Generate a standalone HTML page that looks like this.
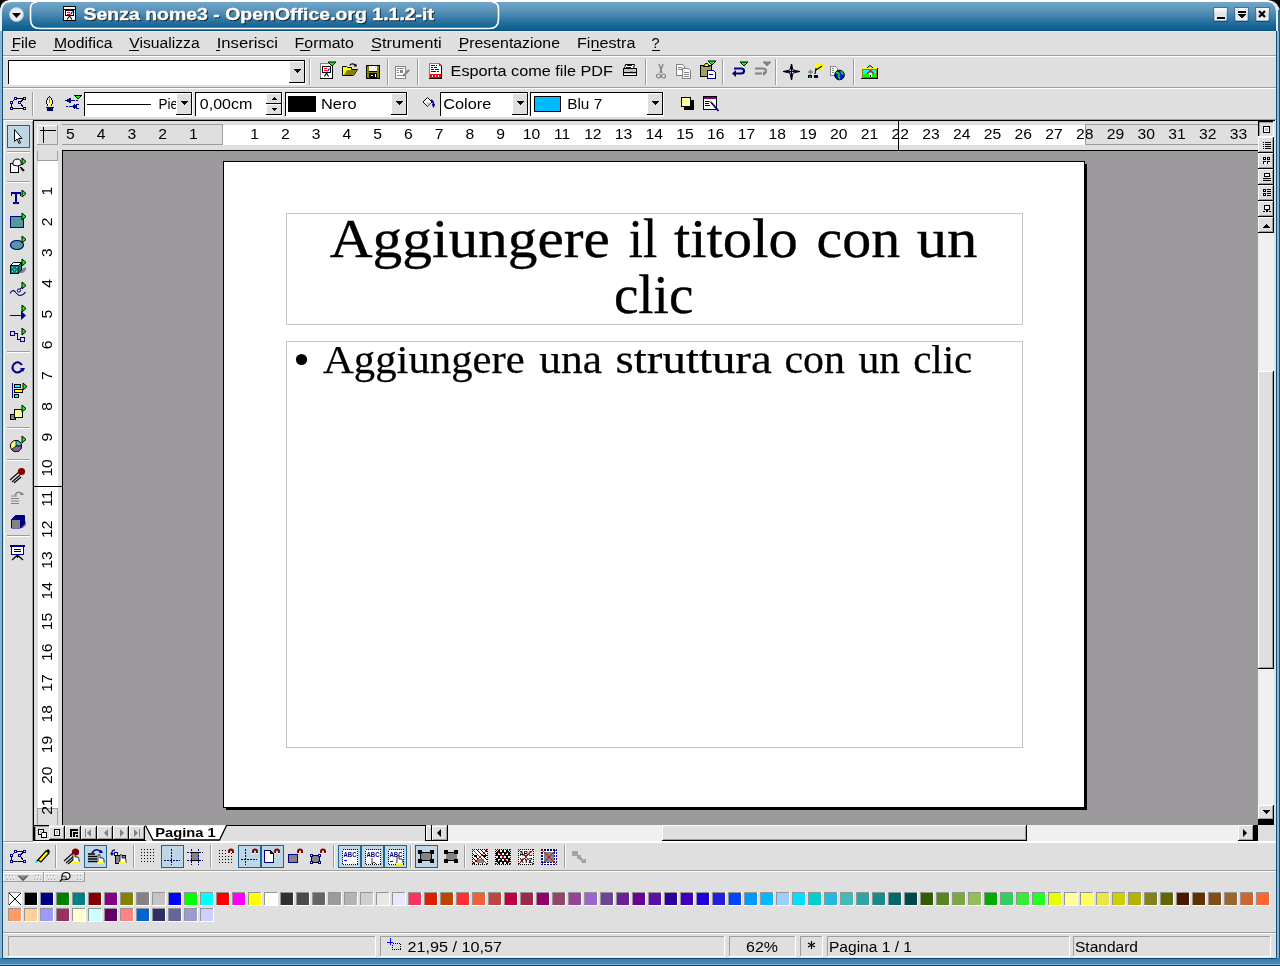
<!DOCTYPE html>
<html><head><meta charset="utf-8"><style>
html,body{margin:0;padding:0;width:1280px;height:966px;overflow:hidden;background:#dedfde;font-family:"Liberation Sans",sans-serif}
svg{display:block;will-change:transform}
text{white-space:pre}
</style></head><body>
<svg width="1280" height="966" viewBox="0 0 1280 966" shape-rendering="crispEdges">
<rect x="0" y="0" width="1280" height="966" fill="#dedfde" /><rect x="0" y="0" width="1280" height="2" fill="#ffffff" /><defs><linearGradient id="tg" x1="0" y1="0" x2="0" y2="1">
<stop offset="0" stop-color="#72a6ca"/><stop offset="0.3" stop-color="#5a93b9"/>
<stop offset="0.55" stop-color="#3a7ea8"/><stop offset="0.8" stop-color="#186798"/>
<stop offset="1" stop-color="#0c5b8c"/></linearGradient>
<linearGradient id="bg2" x1="0" y1="0" x2="0" y2="1">
<stop offset="0" stop-color="#2b78a8"/><stop offset="0.6" stop-color="#4a8cb8"/><stop offset="1" stop-color="#1a6698"/></linearGradient>
</defs><path d="M2,12 Q2,3 11,2 L1268,2 Q1276,3 1276,12 L1276,31 L0,31 Z" fill="url(#tg)" shape-rendering="geometricPrecision"/><rect x="0" y="30" width="1280" height="1" fill="#08507e" /><path d="M0,8 Q0,2 8,2 L10,2 Q2.5,2.5 2,10 L2,31 L0,31 Z" fill="#e8f0f6" shape-rendering="geometricPrecision"/><path d="M0,0 L9,0 Q1,1 0,9 Z" fill="#000" shape-rendering="geometricPrecision"/><path d="M1268,2 Q1278,2.5 1278,12 L1278,31 L1276,31 L1276,12 Q1276,3 1268,2 Z" fill="#e8f0f6" shape-rendering="geometricPrecision"/><rect x="1278" y="10" width="2" height="21" fill="#2a6a98" /><path d="M1280,0 L1268,0 Q1279,1.5 1280,12 Z" fill="#000" shape-rendering="geometricPrecision"/><rect x="0" y="31" width="2" height="935" fill="#8cb4d4" /><rect x="2" y="31" width="1" height="935" fill="#0d4f7a" /><rect x="1276" y="31" width="1" height="935" fill="#0d4f7a" /><rect x="1277" y="31" width="2" height="935" fill="#8cb4d4" /><rect x="1279" y="31" width="1" height="935" fill="#0d4f7a" /><rect x="0" y="958" width="1280" height="8" fill="url(#bg2)" /><rect x="3" y="958" width="1273" height="1" fill="#0d4f7a" /><rect x="0" y="964" width="1280" height="1" fill="#8cb4d4" /><rect x="0" y="965" width="1280" height="1" fill="#0a3e60" /><path d="M37,2 Q30.5,2 30.5,9 L30.5,19 Q30.5,28.5 40,28.5 L489,28.5 Q498.5,28.5 498.5,19 L498.5,9 Q498.5,2 492,2" fill="none" stroke="#ffffff" stroke-width="1.6" shape-rendering="geometricPrecision"/><circle cx="16.5" cy="14.5" r="7" fill="#e8ecf4" stroke="#b8c8d8" stroke-width="0.8" shape-rendering="geometricPrecision"/><path d="M12,13 L21,13 L16.5,18 Z" fill="#000" shape-rendering="geometricPrecision"/><text x="83.50" y="20" font-family="Liberation Sans" font-size="17.15" font-weight="bold" fill="#000000" textLength="350.50" lengthAdjust="spacingAndGlyphs" transform="translate(1,1)" opacity="0.75" stroke="#000" stroke-width="0.3">Senza nome3 - OpenOffice.org 1.1.2-it</text><text x="83.50" y="20" font-family="Liberation Sans" font-size="17.15" font-weight="bold" fill="#ffffff" textLength="350.50" lengthAdjust="spacingAndGlyphs" stroke="#fff" stroke-width="0.35">Senza nome3 - OpenOffice.org 1.1.2-it</text><defs><linearGradient id="wb" x1="0" y1="0" x2="0" y2="1"><stop offset="0" stop-color="#ffffff"/><stop offset="0.5" stop-color="#dfe3ea"/><stop offset="1" stop-color="#f4f6fa"/></linearGradient></defs><path d="M1213.5,7.5 H1227.5 L1227,21 H1214 Z" fill="url(#wb)" stroke="#1a4a78" stroke-width="0.7" shape-rendering="geometricPrecision"/><rect x="1214" y="21" width="14" height="1" fill="#0a3a66" opacity="0.6"/><path d="M1234.5,7.5 H1248.5 L1248,21 H1235 Z" fill="url(#wb)" stroke="#1a4a78" stroke-width="0.7" shape-rendering="geometricPrecision"/><rect x="1235" y="21" width="14" height="1" fill="#0a3a66" opacity="0.6"/><path d="M1255.5,7.5 H1269.5 L1269,21 H1256 Z" fill="url(#wb)" stroke="#1a4a78" stroke-width="0.7" shape-rendering="geometricPrecision"/><rect x="1256" y="21" width="14" height="1" fill="#0a3a66" opacity="0.6"/><rect x="1217" y="17" width="8" height="2" fill="#000" /><rect x="1238" y="11" width="8" height="2" fill="#000" /><path d="M1238,14 L1246,14 L1242,19 Z" fill="#000"/><path d="M1259,11 L1265,17 M1265,11 L1259,17" stroke="#000" stroke-width="2.2" shape-rendering="geometricPrecision"/><rect x="3" y="31" width="1273" height="1" fill="#ece8e4" /><text x="11.70" y="48" font-family="Liberation Sans" font-size="14.53" fill="#000" textLength="24.81" lengthAdjust="spacingAndGlyphs" >File</text><text x="54.00" y="48" font-family="Liberation Sans" font-size="14.53" fill="#000" textLength="58.48" lengthAdjust="spacingAndGlyphs" >Modifica</text><text x="129.30" y="48" font-family="Liberation Sans" font-size="14.53" fill="#000" textLength="70.38" lengthAdjust="spacingAndGlyphs" >Visualizza</text><text x="216.70" y="48" font-family="Liberation Sans" font-size="14.53" fill="#000" textLength="61.29" lengthAdjust="spacingAndGlyphs" >Inserisci</text><text x="294.60" y="48" font-family="Liberation Sans" font-size="14.53" fill="#000" textLength="59.20" lengthAdjust="spacingAndGlyphs" >Formato</text><text x="371.00" y="48" font-family="Liberation Sans" font-size="14.53" fill="#000" textLength="70.71" lengthAdjust="spacingAndGlyphs" >Strumenti</text><text x="458.70" y="48" font-family="Liberation Sans" font-size="14.53" fill="#000" textLength="101.30" lengthAdjust="spacingAndGlyphs" >Presentazione</text><text x="577.00" y="48" font-family="Liberation Sans" font-size="14.53" fill="#000" textLength="58.39" lengthAdjust="spacingAndGlyphs" >Finestra</text><text x="651.50" y="48" font-family="Liberation Sans" font-size="14.53" fill="#000" textLength="8.00" lengthAdjust="spacingAndGlyphs" >?</text><rect x="11" y="50" width="8" height="1" fill="#000" /><rect x="53" y="50" width="13" height="1" fill="#000" /><rect x="129" y="50" width="10" height="1" fill="#000" /><rect x="216" y="50" width="4" height="1" fill="#000" /><rect x="300" y="50" width="10" height="1" fill="#000" /><rect x="371" y="50" width="9" height="1" fill="#000" /><rect x="458" y="50" width="9" height="1" fill="#000" /><rect x="592" y="50" width="9" height="1" fill="#000" /><rect x="652" y="50" width="8" height="1" fill="#000" /><rect x="3" y="55" width="1273" height="1" fill="#9c9e9c" /><rect x="3" y="56" width="1273" height="1" fill="#ffffff" /><rect x="3" y="87" width="1273" height="1" fill="#9c9e9c" /><rect x="3" y="88" width="1273" height="1" fill="#ffffff" /><rect x="8" y="60" width="298" height="25" fill="#ffffff" /><rect x="8" y="60" width="297" height="1" fill="#000" /><rect x="8" y="60" width="1" height="24" fill="#000" /><rect x="304" y="60" width="1" height="23" fill="#000" /><rect x="289" y="61" width="15" height="21" fill="#dedfde" /><rect x="289" y="61" width="1" height="21" fill="#ffffff" /><rect x="289" y="61" width="15" height="1" fill="#ffffff" /><rect x="289" y="82" width="16" height="1" fill="#000" /><path d="M293,69 L301,69 L297,73 Z" fill="#000"/><rect x="309" y="59" width="1" height="26" fill="#9c9e9c" /><rect x="310" y="59" width="1" height="26" fill="#ffffff" /><rect x="387" y="59" width="1" height="26" fill="#9c9e9c" /><rect x="388" y="59" width="1" height="26" fill="#ffffff" /><rect x="417" y="59" width="1" height="26" fill="#9c9e9c" /><rect x="418" y="59" width="1" height="26" fill="#ffffff" /><text x="450.60" y="76" font-family="Liberation Sans" font-size="14.53" fill="#000" textLength="162.41" lengthAdjust="spacingAndGlyphs" >Esporta come file PDF</text><rect x="645" y="59" width="1" height="26" fill="#9c9e9c" /><rect x="646" y="59" width="1" height="26" fill="#ffffff" /><rect x="722" y="59" width="1" height="26" fill="#9c9e9c" /><rect x="723" y="59" width="1" height="26" fill="#ffffff" /><rect x="775" y="59" width="1" height="26" fill="#9c9e9c" /><rect x="776" y="59" width="1" height="26" fill="#ffffff" /><rect x="853" y="59" width="1" height="26" fill="#9c9e9c" /><rect x="854" y="59" width="1" height="26" fill="#ffffff" /><rect x="3" y="119" width="1273" height="1" fill="#9c9e9c" /><rect x="3" y="120" width="1273" height="1" fill="#ffffff" /><rect x="32" y="92" width="1" height="24" fill="#9c9e9c" /><rect x="33" y="92" width="1" height="24" fill="#ffffff" /><rect x="84" y="92" width="109" height="25" fill="#ffffff" /><rect x="84" y="92" width="108" height="1" fill="#000" /><rect x="84" y="92" width="1" height="24" fill="#000" /><rect x="191" y="92" width="1" height="23" fill="#000" /><rect x="176" y="93" width="15" height="21" fill="#dedfde" /><rect x="176" y="93" width="1" height="21" fill="#ffffff" /><rect x="176" y="93" width="15" height="1" fill="#ffffff" /><rect x="176" y="114" width="16" height="1" fill="#000" /><path d="M180,101 L188,101 L184,105 Z" fill="#000"/><rect x="85" y="93" width="91" height="21" fill="#ffffff" /><rect x="87" y="104" width="64" height="1" fill="#000" /><clipPath id="cp1"><rect x="85" y="92" width="91" height="24"/></clipPath><g clip-path="url(#cp1)"><text x="158.50" y="109" font-family="Liberation Sans" font-size="14.53" fill="#000" textLength="19.50" lengthAdjust="spacingAndGlyphs" >Pie</text></g><rect x="195" y="92" width="88" height="25" fill="#ffffff" /><rect x="195" y="92" width="87" height="1" fill="#000" /><rect x="195" y="92" width="1" height="24" fill="#000" /><rect x="281" y="92" width="1" height="23" fill="#000" /><rect x="266" y="93" width="15" height="21" fill="#dedfde" /><rect x="266" y="93" width="1" height="21" fill="#ffffff" /><rect x="266" y="93" width="15" height="1" fill="#ffffff" /><rect x="266" y="114" width="16" height="1" fill="#000" /><rect x="266" y="93" width="15" height="22" fill="#dedfde" /><rect x="266" y="93" width="15" height="1" fill="#ffffff" /><rect x="266" y="93" width="1" height="11" fill="#ffffff" /><rect x="266" y="103" width="16" height="1" fill="#000" /><rect x="266" y="104" width="15" height="1" fill="#ffffff" /><rect x="266" y="104" width="1" height="11" fill="#ffffff" /><rect x="266" y="114" width="16" height="1" fill="#000" /><path d="M271,100 L277,100 L274,97 Z" fill="#000"/><path d="M271,108 L277,108 L274,111 Z" fill="#000"/><text x="199.80" y="109" font-family="Liberation Sans" font-size="14.53" fill="#000" textLength="52.51" lengthAdjust="spacingAndGlyphs" >0,00cm</text><rect x="285" y="92" width="123" height="25" fill="#ffffff" /><rect x="285" y="92" width="122" height="1" fill="#000" /><rect x="285" y="92" width="1" height="24" fill="#000" /><rect x="406" y="92" width="1" height="23" fill="#000" /><rect x="391" y="93" width="15" height="21" fill="#dedfde" /><rect x="391" y="93" width="1" height="21" fill="#ffffff" /><rect x="391" y="93" width="15" height="1" fill="#ffffff" /><rect x="391" y="114" width="16" height="1" fill="#000" /><path d="M395,101 L403,101 L399,105 Z" fill="#000"/><rect x="288" y="96" width="28" height="16" fill="#000" /><text x="321.00" y="109" font-family="Liberation Sans" font-size="14.53" fill="#000" textLength="35.49" lengthAdjust="spacingAndGlyphs" >Nero</text><rect x="440" y="92" width="89" height="25" fill="#ffffff" /><rect x="440" y="92" width="88" height="1" fill="#000" /><rect x="440" y="92" width="1" height="24" fill="#000" /><rect x="527" y="92" width="1" height="23" fill="#000" /><rect x="512" y="93" width="15" height="21" fill="#dedfde" /><rect x="512" y="93" width="1" height="21" fill="#ffffff" /><rect x="512" y="93" width="15" height="1" fill="#ffffff" /><rect x="512" y="114" width="16" height="1" fill="#000" /><path d="M516,101 L524,101 L520,105 Z" fill="#000"/><text x="443.25" y="109" font-family="Liberation Sans" font-size="14.53" fill="#000" textLength="48.00" lengthAdjust="spacingAndGlyphs" >Colore</text><rect x="530" y="92" width="134" height="25" fill="#ffffff" /><rect x="530" y="92" width="133" height="1" fill="#000" /><rect x="530" y="92" width="1" height="24" fill="#000" /><rect x="662" y="92" width="1" height="23" fill="#000" /><rect x="647" y="93" width="15" height="21" fill="#dedfde" /><rect x="647" y="93" width="1" height="21" fill="#ffffff" /><rect x="647" y="93" width="15" height="1" fill="#ffffff" /><rect x="647" y="114" width="16" height="1" fill="#000" /><path d="M651,101 L659,101 L655,105 Z" fill="#000"/><rect x="534" y="96" width="27" height="16" fill="#000" /><rect x="535" y="97" width="25" height="14" fill="#00baff" /><text x="567.20" y="109" font-family="Liberation Sans" font-size="14.53" fill="#000" textLength="35.00" lengthAdjust="spacingAndGlyphs" >Blu 7</text><rect x="4" y="120" width="29" height="1" fill="#ffffff" /><rect x="33" y="120" width="1242" height="1" fill="#000" /><rect x="33" y="120" width="1" height="721" fill="#000" /><rect x="34" y="121" width="1224" height="29" fill="#dedfde" /><rect x="37" y="125" width="21" height="20" fill="#dedfde" /><rect x="37" y="125" width="21" height="1" fill="#ffffff" /><rect x="37" y="125" width="1" height="20" fill="#ffffff" /><rect x="37" y="144" width="21" height="1" fill="#9c9e9c" /><rect x="57" y="125" width="1" height="20" fill="#9c9e9c" /><rect x="62" y="125" width="1196" height="20" fill="#dedfde" /><rect x="222" y="125" width="863" height="20" fill="#ffffff" /><rect x="62" y="150" width="1196" height="1" fill="#000" /><rect x="34" y="151" width="29" height="674" fill="#dedfde" /><rect x="38" y="161" width="20" height="647" fill="#ffffff" /><rect x="62" y="150" width="1" height="675" fill="#000" /><rect x="37" y="151" width="21" height="10" fill="#dedfde" /><rect x="63" y="151" width="1195" height="674" fill="#9c9a9c" /><rect x="223" y="161" width="862" height="647" fill="#000" /><rect x="224" y="162" width="860" height="645" fill="#ffffff" /><rect x="1084" y="164" width="3" height="646" fill="#000" /><rect x="226" y="807" width="861" height="3" fill="#000" /><rect x="286.5" y="213.5" width="736" height="111" fill="none" stroke="#c6c3c6" stroke-width="1"/><rect x="286.5" y="341.5" width="736" height="406" fill="none" stroke="#c6c3c6" stroke-width="1"/><text x="329.70" y="257" font-family="Liberation Serif" font-size="54.96" fill="#000" textLength="280.28" lengthAdjust="spacingAndGlyphs" stroke="#000" stroke-width="0.35">Aggiungere</text><text x="628.75" y="257" font-family="Liberation Serif" font-size="54.96" fill="#000" textLength="28.43" lengthAdjust="spacingAndGlyphs" stroke="#000" stroke-width="0.35">il</text><text x="674.00" y="257" font-family="Liberation Serif" font-size="54.96" fill="#000" textLength="123.72" lengthAdjust="spacingAndGlyphs" stroke="#000" stroke-width="0.35">titolo</text><text x="816.60" y="257" font-family="Liberation Serif" font-size="54.96" fill="#000" textLength="83.59" lengthAdjust="spacingAndGlyphs" stroke="#000" stroke-width="0.35">con</text><text x="916.70" y="257" font-family="Liberation Serif" font-size="54.96" fill="#000" textLength="60.70" lengthAdjust="spacingAndGlyphs" stroke="#000" stroke-width="0.35">un</text><text x="613.90" y="313" font-family="Liberation Serif" font-size="54.96" fill="#000" textLength="79.42" lengthAdjust="spacingAndGlyphs" stroke="#000" stroke-width="0.35">clic</text><circle cx="301.5" cy="359.5" r="5.6" fill="#000" shape-rendering="geometricPrecision"/><text x="323.00" y="373" font-family="Liberation Serif" font-size="39.69" fill="#000" textLength="201.79" lengthAdjust="spacingAndGlyphs" stroke="#000" stroke-width="0.25">Aggiungere</text><text x="539.30" y="373" font-family="Liberation Serif" font-size="39.69" fill="#000" textLength="62.59" lengthAdjust="spacingAndGlyphs" stroke="#000" stroke-width="0.25">una</text><text x="615.60" y="373" font-family="Liberation Serif" font-size="39.69" fill="#000" textLength="156.18" lengthAdjust="spacingAndGlyphs" stroke="#000" stroke-width="0.25">struttura</text><text x="784.50" y="373" font-family="Liberation Serif" font-size="39.69" fill="#000" textLength="60.49" lengthAdjust="spacingAndGlyphs" stroke="#000" stroke-width="0.25">con</text><text x="858.40" y="373" font-family="Liberation Serif" font-size="39.69" fill="#000" textLength="41.50" lengthAdjust="spacingAndGlyphs" stroke="#000" stroke-width="0.25">un</text><text x="913.20" y="373" font-family="Liberation Serif" font-size="39.69" fill="#000" textLength="59.11" lengthAdjust="spacingAndGlyphs" stroke="#000" stroke-width="0.25">clic</text><rect x="1258" y="121" width="17" height="704" fill="#dedfde" /><rect x="1258" y="232" width="16" height="573" fill="#efefef" /><rect x="1259" y="371" width="15" height="434" fill="#dedfde" /><rect x="1259" y="371" width="15" height="1" fill="#ffffff" /><rect x="1259" y="371" width="1" height="434" fill="#ffffff" /><rect x="1259" y="804" width="15" height="1" fill="#9c9e9c" /><rect x="1273" y="371" width="1" height="434" fill="#9c9e9c" /><rect x="1273" y="371" width="1" height="434" fill="#000" /><rect x="34" y="825" width="1224" height="16" fill="#dedfde" /><rect x="1258" y="825" width="17" height="16" fill="#dedfde" /><rect x="3" y="841" width="1273" height="1" fill="#9c9e9c" /><rect x="3" y="842" width="1273" height="1" fill="#ffffff" /><rect x="3" y="870" width="1273" height="1" fill="#9c9e9c" /><rect x="3" y="871" width="1273" height="1" fill="#ffffff" /><rect x="3" y="932" width="1273" height="1" fill="#9c9e9c" /><rect x="3" y="933" width="1273" height="1" fill="#ffffff" /><rect x="8" y="936" width="368" height="1" fill="#9c9e9c" /><rect x="8" y="936" width="1" height="21" fill="#9c9e9c" /><rect x="8" y="956" width="368" height="1" fill="#ffffff" /><rect x="375" y="936" width="1" height="21" fill="#ffffff" /><rect x="380" y="936" width="345" height="1" fill="#9c9e9c" /><rect x="380" y="936" width="1" height="21" fill="#9c9e9c" /><rect x="380" y="956" width="345" height="1" fill="#ffffff" /><rect x="724" y="936" width="1" height="21" fill="#ffffff" /><rect x="729" y="936" width="67" height="1" fill="#9c9e9c" /><rect x="729" y="936" width="1" height="21" fill="#9c9e9c" /><rect x="729" y="956" width="67" height="1" fill="#ffffff" /><rect x="795" y="936" width="1" height="21" fill="#ffffff" /><rect x="800" y="936" width="23" height="1" fill="#9c9e9c" /><rect x="800" y="936" width="1" height="21" fill="#9c9e9c" /><rect x="800" y="956" width="23" height="1" fill="#ffffff" /><rect x="822" y="936" width="1" height="21" fill="#ffffff" /><rect x="827" y="936" width="243" height="1" fill="#9c9e9c" /><rect x="827" y="936" width="1" height="21" fill="#9c9e9c" /><rect x="827" y="956" width="243" height="1" fill="#ffffff" /><rect x="1069" y="936" width="1" height="21" fill="#ffffff" /><rect x="1073" y="936" width="198" height="1" fill="#9c9e9c" /><rect x="1073" y="936" width="1" height="21" fill="#9c9e9c" /><rect x="1073" y="956" width="198" height="1" fill="#ffffff" /><rect x="1270" y="936" width="1" height="21" fill="#ffffff" /><text x="407.50" y="952" font-family="Liberation Sans" font-size="15.26" fill="#000" textLength="94.51" lengthAdjust="spacingAndGlyphs" >21,95 / 10,57</text><text x="746.00" y="952" font-family="Liberation Sans" font-size="15.26" fill="#000" textLength="32.01" lengthAdjust="spacingAndGlyphs" >62%</text><path d="M811.5,941 V949 M808,943 L815,947 M815,943 L808,947" stroke="#000" stroke-width="1.2" shape-rendering="geometricPrecision"/><text x="829.00" y="952" font-family="Liberation Sans" font-size="15.26" fill="#000" textLength="83.01" lengthAdjust="spacingAndGlyphs" >Pagina 1 / 1</text><text x="1075.00" y="952" font-family="Liberation Sans" font-size="15.26" fill="#000" textLength="62.99" lengthAdjust="spacingAndGlyphs" >Standard</text><text x="65.94" y="139" font-family="Liberation Sans" font-size="14.53" fill="#000" textLength="8.73" lengthAdjust="spacingAndGlyphs">5</text><text x="96.68" y="139" font-family="Liberation Sans" font-size="14.53" fill="#000" textLength="8.73" lengthAdjust="spacingAndGlyphs">4</text><text x="127.42" y="139" font-family="Liberation Sans" font-size="14.53" fill="#000" textLength="8.73" lengthAdjust="spacingAndGlyphs">3</text><text x="158.16" y="139" font-family="Liberation Sans" font-size="14.53" fill="#000" textLength="8.73" lengthAdjust="spacingAndGlyphs">2</text><text x="188.90" y="139" font-family="Liberation Sans" font-size="14.53" fill="#000" textLength="8.73" lengthAdjust="spacingAndGlyphs">1</text><text x="250.38" y="139" font-family="Liberation Sans" font-size="14.53" fill="#000" textLength="8.73" lengthAdjust="spacingAndGlyphs">1</text><text x="281.12" y="139" font-family="Liberation Sans" font-size="14.53" fill="#000" textLength="8.73" lengthAdjust="spacingAndGlyphs">2</text><text x="311.86" y="139" font-family="Liberation Sans" font-size="14.53" fill="#000" textLength="8.73" lengthAdjust="spacingAndGlyphs">3</text><text x="342.60" y="139" font-family="Liberation Sans" font-size="14.53" fill="#000" textLength="8.73" lengthAdjust="spacingAndGlyphs">4</text><text x="373.34" y="139" font-family="Liberation Sans" font-size="14.53" fill="#000" textLength="8.73" lengthAdjust="spacingAndGlyphs">5</text><text x="404.08" y="139" font-family="Liberation Sans" font-size="14.53" fill="#000" textLength="8.73" lengthAdjust="spacingAndGlyphs">6</text><text x="434.82" y="139" font-family="Liberation Sans" font-size="14.53" fill="#000" textLength="8.73" lengthAdjust="spacingAndGlyphs">7</text><text x="465.56" y="139" font-family="Liberation Sans" font-size="14.53" fill="#000" textLength="8.73" lengthAdjust="spacingAndGlyphs">8</text><text x="496.30" y="139" font-family="Liberation Sans" font-size="14.53" fill="#000" textLength="8.73" lengthAdjust="spacingAndGlyphs">9</text><text x="522.67" y="139" font-family="Liberation Sans" font-size="14.53" fill="#000" textLength="17.46" lengthAdjust="spacingAndGlyphs">10</text><text x="553.99" y="139" font-family="Liberation Sans" font-size="14.53" fill="#000" textLength="16.30" lengthAdjust="spacingAndGlyphs">11</text><text x="584.15" y="139" font-family="Liberation Sans" font-size="14.53" fill="#000" textLength="17.46" lengthAdjust="spacingAndGlyphs">12</text><text x="614.89" y="139" font-family="Liberation Sans" font-size="14.53" fill="#000" textLength="17.46" lengthAdjust="spacingAndGlyphs">13</text><text x="645.63" y="139" font-family="Liberation Sans" font-size="14.53" fill="#000" textLength="17.46" lengthAdjust="spacingAndGlyphs">14</text><text x="676.37" y="139" font-family="Liberation Sans" font-size="14.53" fill="#000" textLength="17.46" lengthAdjust="spacingAndGlyphs">15</text><text x="707.11" y="139" font-family="Liberation Sans" font-size="14.53" fill="#000" textLength="17.46" lengthAdjust="spacingAndGlyphs">16</text><text x="737.85" y="139" font-family="Liberation Sans" font-size="14.53" fill="#000" textLength="17.46" lengthAdjust="spacingAndGlyphs">17</text><text x="768.59" y="139" font-family="Liberation Sans" font-size="14.53" fill="#000" textLength="17.46" lengthAdjust="spacingAndGlyphs">18</text><text x="799.33" y="139" font-family="Liberation Sans" font-size="14.53" fill="#000" textLength="17.46" lengthAdjust="spacingAndGlyphs">19</text><text x="830.07" y="139" font-family="Liberation Sans" font-size="14.53" fill="#000" textLength="17.46" lengthAdjust="spacingAndGlyphs">20</text><text x="860.81" y="139" font-family="Liberation Sans" font-size="14.53" fill="#000" textLength="17.46" lengthAdjust="spacingAndGlyphs">21</text><text x="891.55" y="139" font-family="Liberation Sans" font-size="14.53" fill="#000" textLength="17.46" lengthAdjust="spacingAndGlyphs">22</text><text x="922.29" y="139" font-family="Liberation Sans" font-size="14.53" fill="#000" textLength="17.46" lengthAdjust="spacingAndGlyphs">23</text><text x="953.03" y="139" font-family="Liberation Sans" font-size="14.53" fill="#000" textLength="17.46" lengthAdjust="spacingAndGlyphs">24</text><text x="983.77" y="139" font-family="Liberation Sans" font-size="14.53" fill="#000" textLength="17.46" lengthAdjust="spacingAndGlyphs">25</text><text x="1014.51" y="139" font-family="Liberation Sans" font-size="14.53" fill="#000" textLength="17.46" lengthAdjust="spacingAndGlyphs">26</text><text x="1045.25" y="139" font-family="Liberation Sans" font-size="14.53" fill="#000" textLength="17.46" lengthAdjust="spacingAndGlyphs">27</text><text x="1075.99" y="139" font-family="Liberation Sans" font-size="14.53" fill="#000" textLength="17.46" lengthAdjust="spacingAndGlyphs">28</text><text x="1106.73" y="139" font-family="Liberation Sans" font-size="14.53" fill="#000" textLength="17.46" lengthAdjust="spacingAndGlyphs">29</text><text x="1137.47" y="139" font-family="Liberation Sans" font-size="14.53" fill="#000" textLength="17.46" lengthAdjust="spacingAndGlyphs">30</text><text x="1168.21" y="139" font-family="Liberation Sans" font-size="14.53" fill="#000" textLength="17.46" lengthAdjust="spacingAndGlyphs">31</text><text x="1198.95" y="139" font-family="Liberation Sans" font-size="14.53" fill="#000" textLength="17.46" lengthAdjust="spacingAndGlyphs">32</text><text x="1229.69" y="139" font-family="Liberation Sans" font-size="14.53" fill="#000" textLength="17.46" lengthAdjust="spacingAndGlyphs">33</text><rect x="62" y="124" width="161" height="1" fill="#9c9e9c" /><rect x="62" y="144" width="161" height="1" fill="#9c9e9c" /><rect x="222" y="124" width="1" height="21" fill="#9c9e9c" /><rect x="1085" y="124" width="173" height="1" fill="#9c9e9c" /><rect x="1085" y="144" width="173" height="1" fill="#9c9e9c" /><rect x="1085" y="124" width="1" height="21" fill="#9c9e9c" /><rect x="898" y="121" width="1" height="29" fill="#000" /><text transform="translate(51.5,191.24) rotate(-90)" x="-4.36" y="0" font-family="Liberation Sans" font-size="14.53" fill="#000" textLength="8.73" lengthAdjust="spacingAndGlyphs">1</text><text transform="translate(51.5,221.98) rotate(-90)" x="-4.36" y="0" font-family="Liberation Sans" font-size="14.53" fill="#000" textLength="8.73" lengthAdjust="spacingAndGlyphs">2</text><text transform="translate(51.5,252.72) rotate(-90)" x="-4.36" y="0" font-family="Liberation Sans" font-size="14.53" fill="#000" textLength="8.73" lengthAdjust="spacingAndGlyphs">3</text><text transform="translate(51.5,283.46) rotate(-90)" x="-4.36" y="0" font-family="Liberation Sans" font-size="14.53" fill="#000" textLength="8.73" lengthAdjust="spacingAndGlyphs">4</text><text transform="translate(51.5,314.2) rotate(-90)" x="-4.36" y="0" font-family="Liberation Sans" font-size="14.53" fill="#000" textLength="8.73" lengthAdjust="spacingAndGlyphs">5</text><text transform="translate(51.5,344.94) rotate(-90)" x="-4.36" y="0" font-family="Liberation Sans" font-size="14.53" fill="#000" textLength="8.73" lengthAdjust="spacingAndGlyphs">6</text><text transform="translate(51.5,375.67999999999995) rotate(-90)" x="-4.36" y="0" font-family="Liberation Sans" font-size="14.53" fill="#000" textLength="8.73" lengthAdjust="spacingAndGlyphs">7</text><text transform="translate(51.5,406.41999999999996) rotate(-90)" x="-4.36" y="0" font-family="Liberation Sans" font-size="14.53" fill="#000" textLength="8.73" lengthAdjust="spacingAndGlyphs">8</text><text transform="translate(51.5,437.15999999999997) rotate(-90)" x="-4.36" y="0" font-family="Liberation Sans" font-size="14.53" fill="#000" textLength="8.73" lengthAdjust="spacingAndGlyphs">9</text><text transform="translate(51.5,467.9) rotate(-90)" x="-8.73" y="0" font-family="Liberation Sans" font-size="14.53" fill="#000" textLength="17.46" lengthAdjust="spacingAndGlyphs">10</text><text transform="translate(51.5,498.64) rotate(-90)" x="-8.15" y="0" font-family="Liberation Sans" font-size="14.53" fill="#000" textLength="16.30" lengthAdjust="spacingAndGlyphs">11</text><text transform="translate(51.5,529.38) rotate(-90)" x="-8.73" y="0" font-family="Liberation Sans" font-size="14.53" fill="#000" textLength="17.46" lengthAdjust="spacingAndGlyphs">12</text><text transform="translate(51.5,560.12) rotate(-90)" x="-8.73" y="0" font-family="Liberation Sans" font-size="14.53" fill="#000" textLength="17.46" lengthAdjust="spacingAndGlyphs">13</text><text transform="translate(51.5,590.8599999999999) rotate(-90)" x="-8.73" y="0" font-family="Liberation Sans" font-size="14.53" fill="#000" textLength="17.46" lengthAdjust="spacingAndGlyphs">14</text><text transform="translate(51.5,621.5999999999999) rotate(-90)" x="-8.73" y="0" font-family="Liberation Sans" font-size="14.53" fill="#000" textLength="17.46" lengthAdjust="spacingAndGlyphs">15</text><text transform="translate(51.5,652.3399999999999) rotate(-90)" x="-8.73" y="0" font-family="Liberation Sans" font-size="14.53" fill="#000" textLength="17.46" lengthAdjust="spacingAndGlyphs">16</text><text transform="translate(51.5,683.0799999999999) rotate(-90)" x="-8.73" y="0" font-family="Liberation Sans" font-size="14.53" fill="#000" textLength="17.46" lengthAdjust="spacingAndGlyphs">17</text><text transform="translate(51.5,713.8199999999999) rotate(-90)" x="-8.73" y="0" font-family="Liberation Sans" font-size="14.53" fill="#000" textLength="17.46" lengthAdjust="spacingAndGlyphs">18</text><text transform="translate(51.5,744.56) rotate(-90)" x="-8.73" y="0" font-family="Liberation Sans" font-size="14.53" fill="#000" textLength="17.46" lengthAdjust="spacingAndGlyphs">19</text><text transform="translate(51.5,775.3) rotate(-90)" x="-8.73" y="0" font-family="Liberation Sans" font-size="14.53" fill="#000" textLength="17.46" lengthAdjust="spacingAndGlyphs">20</text><text transform="translate(51.5,806.04) rotate(-90)" x="-8.73" y="0" font-family="Liberation Sans" font-size="14.53" fill="#000" textLength="17.46" lengthAdjust="spacingAndGlyphs">21</text><rect x="34" y="486" width="28" height="1" fill="#000" /><rect x="37" y="160" width="21" height="1" fill="#9c9e9c" /><rect x="57" y="151" width="1" height="10" fill="#9c9e9c" /><g transform="translate(320,63)"><rect x="0" y="0" width="13" height="16" fill="#ffffff"/><rect x="0" y="0" width="9" height="1" fill="#848284"/><rect x="0" y="0" width="1" height="16" fill="#848284"/><rect x="0" y="15" width="13" height="1" fill="#000"/><rect x="12" y="3" width="1" height="13" fill="#000"/><rect x="2" y="3" width="9" height="1" fill="#000"/><rect x="2" y="3" width="1" height="7" fill="#000"/><rect x="10" y="3" width="1" height="7" fill="#000"/><rect x="2" y="9" width="9" height="1" fill="#000"/><rect x="4" y="5" width="3" height="1" fill="#ff0000"/><rect x="4" y="7" width="3" height="1" fill="#ff0000"/><path d="M7.5,8.5 L9.5,5.5" fill="none" stroke="#0000ff" stroke-width="1.2" shape-rendering="geometricPrecision" /><path d="M6.5,10 L4.5,13.5 M6.5,10 L8.5,13.5" fill="none" stroke="#000" stroke-width="1.1" shape-rendering="geometricPrecision" /><path d="M8,-1 L16,-1 L12,3 Z" fill="#00ff00" stroke="#000" stroke-width="1" shape-rendering="geometricPrecision" /></g><g transform="translate(342,63)"><path d="M0.5,3.5 L4.5,3.5 L5.5,4.5 L9.5,4.5 L9.5,6.5 L15.5,6.5 L11.5,12.5 L0.5,12.5 Z" fill="#ffff00" stroke="#000" stroke-width="1" shape-rendering="geometricPrecision" /><path d="M2,12 L5,7 L15,7 L11,12 Z" fill="#848200" stroke="none" stroke-width="1" shape-rendering="geometricPrecision" /><path d="M7.5,2.5 Q10,-0.5 13,2" fill="none" stroke="#000" stroke-width="1.1" shape-rendering="geometricPrecision" /><path d="M11.5,3.5 L15,3.5 L14,0.5 Z" fill="#000" stroke="none" stroke-width="1" shape-rendering="geometricPrecision" /></g><g transform="translate(366,65)"><rect x="0" y="0" width="14" height="14" fill="#000"/><rect x="1" y="1" width="12" height="12" fill="#848200"/><rect x="3" y="1" width="8" height="6" fill="#ffffff"/><rect x="3" y="6" width="8" height="1" fill="#000"/><rect x="3" y="8" width="8" height="5" fill="#000"/><rect x="9" y="9" width="1" height="3" fill="#ffffff"/><rect x="5" y="10" width="2" height="1" fill="#ffffff"/><path d="M4.5,1.5 h1 v1 h-1z M6.5,3.5 h1 v1 h-1z M8.5,1.5 h1 v1 h-1z" fill="#c6c3c6" stroke="none" stroke-width="1" /></g><g transform="translate(395,66)"><path d="M0.5,0.5 H10.5 V12.5 H0.5 Z" fill="#ffffff" stroke="#848284" stroke-width="1" /><rect x="2" y="2" width="7" height="1" fill="#848284"/><rect x="2" y="4" width="2" height="1" fill="#848284"/><rect x="5" y="4" width="3" height="3" fill="#848284"/><rect x="2" y="6" width="2" height="1" fill="#848284"/><rect x="2" y="9" width="7" height="1" fill="#848284"/><path d="M8,10 L14,4" fill="none" stroke="#848284" stroke-width="2.2" shape-rendering="geometricPrecision" /></g><g transform="translate(429,63)"><path d="M0.5,0.5 H10 L12.5,3 V15.5 H0.5 Z" fill="#ffffff" stroke="#848284" stroke-width="1" /><rect x="12" y="3" width="1" height="13" fill="#000"/><rect x="0" y="15" width="13" height="1" fill="#000"/><path d="M10,0 L13,3 L10,3 Z" fill="#ff0000" stroke="none" stroke-width="1" shape-rendering="geometricPrecision" /><rect x="2" y="2" width="4" height="1" fill="#0000ff"/><rect x="7" y="2" width="1" height="1" fill="#0000ff"/><rect x="2" y="4" width="2" height="1" fill="#0000ff"/><rect x="5" y="4" width="3" height="1" fill="#0000ff"/><rect x="2" y="6" width="3" height="1" fill="#0000ff"/><rect x="6" y="6" width="4" height="1" fill="#0000ff"/><rect x="2" y="8" width="5" height="1" fill="#0000ff"/><rect x="8" y="8" width="2" height="1" fill="#0000ff"/><rect x="1" y="11" width="11" height="4" fill="#ff0000"/><rect x="3" y="12" width="1" height="2" fill="#ffffff"/><rect x="6" y="12" width="1" height="2" fill="#ffffff"/><rect x="9" y="12" width="1" height="2" fill="#ffffff"/></g><g transform="translate(622,63)"><path d="M3.5,1.5 H12.5 L11.5,5.5 H2.5 Z" fill="#ffffff" stroke="#000" stroke-width="1" shape-rendering="geometricPrecision" /><rect x="5" y="2" width="5" height="1" fill="#0000ff"/><rect x="4" y="4" width="5" height="1" fill="#0000ff"/><path d="M1.5,5.5 H14.5 V12.5 H1.5 Z" fill="#c6c3c6" stroke="#000" stroke-width="1" /><rect x="2" y="9" width="12" height="1" fill="#000"/><rect x="8" y="8" width="3" height="1" fill="#00ff00"/><rect x="2" y="11" width="12" height="1" fill="#ffffff"/></g><g transform="translate(656,64)"><path d="M3,0 L6,9 M7,0 L4,9" fill="none" stroke="#848284" stroke-width="1.3" shape-rendering="geometricPrecision" /><circle cx="2.5" cy="12" r="2" fill="none" stroke="#848284" stroke-width="1.2" shape-rendering="geometricPrecision"/><circle cx="7.5" cy="12" r="2" fill="none" stroke="#848284" stroke-width="1.2" shape-rendering="geometricPrecision"/></g><g transform="translate(676,64)"><path d="M0.5,0.5 H6.5 L8.5,2.5 V11.5 H0.5 Z" fill="#ffffff" stroke="#848284" stroke-width="1.3" /><rect x="2" y="3" width="4" height="1" fill="#848284"/><rect x="2" y="5" width="4" height="1" fill="#848284"/><path d="M6.5,4.5 H12.5 L14.5,6.5 V14.5 H6.5 Z" fill="#ffffff" stroke="#848284" stroke-width="1.3" /><rect x="8" y="8" width="5" height="1" fill="#848284"/><rect x="8" y="10" width="5" height="1" fill="#848284"/><rect x="8" y="12" width="5" height="1" fill="#848284"/></g><g transform="translate(700,62)"><path d="M0.5,3.5 H11.5 V14.5 H0.5 Z" fill="#a59e63" stroke="#000" stroke-width="1" /><path d="M3.5,4.5 L5.5,1.5 H7.5 L9.5,4.5 Z" fill="#ffff00" stroke="#000" stroke-width="1" shape-rendering="geometricPrecision" /><path d="M7.5,8.5 H13.5 L15.5,10.5 V16.5 H7.5 Z" fill="#ffffff" stroke="#000084" stroke-width="1.4" /><rect x="9" y="12" width="4" height="1" fill="#000084"/><path d="M8,-1 L16,-1 L12,3 Z" fill="#00ff00" stroke="#000" stroke-width="1" shape-rendering="geometricPrecision" /></g><g transform="translate(731,63)"><path d="M3,5.5 H10 Q13,5.5 13,8 Q13,10.5 10,10.5 H3" fill="none" stroke="#000084" stroke-width="2.2" shape-rendering="geometricPrecision" /><path d="M1,10.5 L5,7 L5,14 Z" fill="#000084" stroke="none" stroke-width="1" shape-rendering="geometricPrecision" /><path d="M9,-1 L17,-1 L13,3 Z" fill="#00ff00" stroke="#000" stroke-width="1" shape-rendering="geometricPrecision" /></g><g transform="translate(754,63)"><path d="M1,10.5 H8 M1,5.5 H9 Q12,5.5 12,8 Q12,10.5 9,10.5" fill="none" stroke="#848284" stroke-width="2" shape-rendering="geometricPrecision" /><path d="M9,8 L12,10.5 L9,13 Z" fill="#848284" stroke="none" stroke-width="1" shape-rendering="geometricPrecision" /><path d="M9,-1 L17,-1 L13,3 Z" fill="#848284" stroke="#848284" stroke-width="1" shape-rendering="geometricPrecision" /></g><g transform="translate(783,64)"><path d="M8.5,0 L10,6 L17,7.5 L10,9 L8.5,16 L7,9 L0,7.5 L7,6 Z" fill="#ffffff" stroke="#000" stroke-width="1" shape-rendering="geometricPrecision" /><path d="M8.5,1 L10,6 L15,7.5 L10,7.5 Z M8.5,14 L7,9 L2,7.5 L7,7.5 Z" fill="#000084" stroke="none" stroke-width="1" shape-rendering="geometricPrecision" /><path d="M8.5,0 V16 M0,7.5 H17" fill="none" stroke="#000" stroke-width="1.2" shape-rendering="geometricPrecision" /></g><g transform="translate(807,64)"><rect x="8" y="0" width="9" height="6" fill="#ffff00"/><path d="M1,8 H6 M3.5,5.5 V10.5" fill="none" stroke="#848284" stroke-width="1.5" shape-rendering="geometricPrecision" /><rect x="1" y="11" width="4" height="3" fill="#000"/><rect x="2" y="12" width="2" height="2" fill="#008284"/><rect x="7" y="11" width="4" height="3" fill="#000"/><rect x="8" y="12" width="2" height="2" fill="#000084"/><path d="M8,10 L9,4 M9,6 L15,2" fill="none" stroke="#000" stroke-width="1.1" shape-rendering="geometricPrecision" /></g><g transform="translate(830,66)"><path d="M0.5,0.5 H5.5 L7.5,2.5 V9.5 H0.5 Z" fill="#ffffff" stroke="#848284" stroke-width="1" /><rect x="2" y="2" width="2" height="1" fill="#848284"/><rect x="2" y="4" width="2" height="1" fill="#848284"/><rect x="2" y="6" width="2" height="1" fill="#848284"/><circle cx="9.5" cy="9" r="4.8" fill="#0000ff" stroke="#000" stroke-width="1" shape-rendering="geometricPrecision"/><path d="M6,7 Q8,6 9,8 Q8,11 10,13 M11,5 Q12,8 13.5,8" fill="none" stroke="#00ff00" stroke-width="1.6" shape-rendering="geometricPrecision" /></g><g transform="translate(861,66)"><path d="M6,2 L9,-0.5 L12,2" fill="none" stroke="#000" stroke-width="1" shape-rendering="geometricPrecision" /><rect x="0" y="2" width="17" height="11" fill="#ffff00"/><rect x="1" y="3" width="15" height="9" fill="#848200"/><rect x="2" y="4" width="13" height="7" fill="#00ffff"/><rect x="2" y="8" width="13" height="3" fill="#00ff00"/><path d="M6,8 L9.5,4.5 L13,8" fill="none" stroke="#ff0000" stroke-width="1.5" shape-rendering="geometricPrecision" /><rect x="8" y="7" width="3" height="4" fill="#ffffff"/><rect x="9" y="9" width="1" height="2" fill="#000"/><rect x="16" y="2" width="1" height="11" fill="#000"/><rect x="0" y="12" width="17" height="1" fill="#000"/></g><g transform="translate(10,97)"><path d="M5.5,1.5 H14.5 L9.5,5.5 L14.5,11.5 H1.5 V5.5 Z" fill="none" stroke="#000" stroke-width="1" /><rect x="4.0" y="0.0" width="3" height="3" fill="#000084"/><rect x="5.0" y="1.0" width="1" height="1" fill="#ffffff"/><rect x="13.0" y="0.0" width="3" height="3" fill="#000084"/><rect x="14.0" y="1.0" width="1" height="1" fill="#ffffff"/><rect x="0.0" y="4.0" width="3" height="3" fill="#000084"/><rect x="1.0" y="5.0" width="1" height="1" fill="#ffffff"/><rect x="8.0" y="4.0" width="3" height="3" fill="#000084"/><rect x="9.0" y="5.0" width="1" height="1" fill="#ffffff"/><rect x="0.0" y="10.0" width="3" height="3" fill="#000084"/><rect x="1.0" y="11.0" width="1" height="1" fill="#ffffff"/><rect x="13.0" y="10.0" width="3" height="3" fill="#000084"/><rect x="14.0" y="11.0" width="1" height="1" fill="#ffffff"/></g><g transform="translate(45,96)"><rect x="4" y="0" width="1" height="1" fill="#000"/><rect x="3" y="1" width="1" height="1" fill="#000"/><rect x="5" y="1" width="1" height="1" fill="#000"/><rect x="2" y="2" width="1" height="1" fill="#000"/><rect x="6" y="2" width="1" height="1" fill="#000"/><rect x="2" y="3" width="1" height="1" fill="#000"/><rect x="6" y="3" width="1" height="1" fill="#000"/><rect x="1" y="4" width="1" height="1" fill="#000"/><rect x="7" y="4" width="1" height="1" fill="#000"/><rect x="1" y="5" width="1" height="1" fill="#000"/><rect x="7" y="5" width="1" height="1" fill="#000"/><rect x="1" y="6" width="1" height="1" fill="#000"/><rect x="7" y="6" width="1" height="1" fill="#000"/><rect x="1" y="7" width="1" height="1" fill="#000"/><rect x="7" y="7" width="1" height="1" fill="#000"/><rect x="2" y="8" width="1" height="1" fill="#000"/><rect x="6" y="8" width="1" height="1" fill="#000"/><rect x="2" y="9" width="1" height="1" fill="#000"/><rect x="6" y="9" width="1" height="1" fill="#000"/><rect x="4" y="1" width="1" height="1" fill="#ffff00"/><rect x="3" y="2" width="3" height="2" fill="#ffffff"/><rect x="2" y="4" width="5" height="4" fill="#ffffff"/><rect x="3" y="8" width="3" height="2" fill="#ffffff"/><rect x="3" y="3" width="1" height="1" fill="#ffff00"/><rect x="5" y="4" width="1" height="1" fill="#ffff00"/><rect x="3" y="5" width="1" height="1" fill="#ffff00"/><rect x="5" y="6" width="1" height="1" fill="#ffff00"/><rect x="3" y="7" width="1" height="1" fill="#ffff00"/><rect x="5" y="8" width="1" height="1" fill="#ffff00"/><rect x="4" y="9" width="1" height="1" fill="#ffff00"/><rect x="4" y="2" width="1" height="5" fill="#848284"/><rect x="1" y="11" width="8" height="1" fill="#000084"/><rect x="2" y="12" width="6" height="3" fill="#000084"/><rect x="4" y="12" width="2" height="3" fill="#000"/></g><g transform="translate(65,96)"><path d="M9.5,-0.5 L16.5,-0.5 L13,3 Z" fill="#00ff00" stroke="#000" stroke-width="1" /><rect x="0" y="4" width="2" height="1" fill="#000084"/><rect x="2" y="3" width="2" height="3" fill="#000084"/><rect x="4" y="2" width="2" height="5" fill="#000084"/><rect x="6" y="4" width="4" height="1" fill="#000084"/><rect x="11" y="4" width="2" height="1" fill="#000084"/><rect x="1" y="10" width="2" height="1" fill="#000084"/><rect x="4" y="10" width="4" height="1" fill="#000084"/><rect x="8" y="9" width="1" height="3" fill="#000084"/><rect x="9" y="8" width="1" height="5" fill="#000084"/><rect x="10" y="9" width="1" height="3" fill="#000084"/><rect x="11" y="8" width="3" height="1" fill="#000084"/><rect x="11" y="12" width="3" height="1" fill="#000084"/><rect x="11" y="9" width="1" height="3" fill="#000084"/></g><g transform="translate(420,96)"><path d="M3,6 L7.5,1.5 L12,6 L7.5,10.5 Z" fill="#ffffff" stroke="#000" stroke-width="1" shape-rendering="geometricPrecision" /><path d="M6,5 L8,7 L11,7 L8,10 Z" fill="#84c3e7" stroke="none" stroke-width="1" shape-rendering="geometricPrecision" /><path d="M11,4 Q14,5 13.5,11" fill="none" stroke="#000084" stroke-width="1.6" shape-rendering="geometricPrecision" /><path d="M12,8 L15,8 L13.5,12 Z" fill="#000084" stroke="none" stroke-width="1" shape-rendering="geometricPrecision" /></g><g transform="translate(681,97)"><rect x="3" y="3" width="10" height="10" fill="#000"/><rect x="0" y="0" width="10" height="10" fill="#000"/><rect x="1" y="1" width="8" height="8" fill="#ffff9c"/></g><g transform="translate(703,96)"><rect x="0" y="0" width="14" height="14" fill="#ffffff"/><path d="M0.5,0.5 H13.5 V13.5 H0.5 Z" fill="none" stroke="#000" stroke-width="1" /><rect x="1" y="1" width="12" height="2" fill="#840084"/><rect x="2" y="5" width="5" height="1" fill="#000"/><rect x="2" y="7" width="4" height="1" fill="#000"/><rect x="2" y="9" width="5" height="1" fill="#000"/><path d="M7,5 L15.5,15" fill="none" stroke="#000084" stroke-width="1.8" shape-rendering="geometricPrecision" /><path d="M6,3.5 L9,6.5 M9,3.5 L6,6.5" fill="none" stroke="#ffff00" stroke-width="1" shape-rendering="geometricPrecision" /></g><rect x="4" y="120" width="28" height="1" fill="#ffffff" /><rect x="3" y="120" width="1" height="721" fill="#dedfde" /><rect x="32" y="121" width="1" height="720" fill="#9c9e9c" /><rect x="7.5" y="125.5" width="22" height="22" fill="#bdd7e7" stroke="#186594" stroke-width="1"/><path d="M14.5,129.5 L14.5,141.5 L17,139 L19,143.5 L20.5,142.8 L18.5,138.5 L22,138.5 Z" fill="#ffffff" stroke="#000" stroke-width="1" shape-rendering="geometricPrecision" /><rect x="7" y="151" width="23" height="1" fill="#9c9e9c" /><rect x="7" y="152" width="23" height="1" fill="#ffffff" /><rect x="7" y="181" width="23" height="1" fill="#9c9e9c" /><rect x="7" y="182" width="23" height="1" fill="#ffffff" /><rect x="7" y="351" width="23" height="1" fill="#9c9e9c" /><rect x="7" y="352" width="23" height="1" fill="#ffffff" /><rect x="7" y="427" width="23" height="1" fill="#9c9e9c" /><rect x="7" y="428" width="23" height="1" fill="#ffffff" /><rect x="7" y="459" width="23" height="1" fill="#9c9e9c" /><rect x="7" y="460" width="23" height="1" fill="#ffffff" /><rect x="7" y="535" width="23" height="1" fill="#9c9e9c" /><rect x="7" y="536" width="23" height="1" fill="#ffffff" /><g transform="translate(10,158)"><rect x="0" y="5" width="9" height="10" fill="#000"/><rect x="1" y="6" width="7" height="8" fill="#ffffff"/><path d="M3,7 Q2,1 8,1 Q12,2 11,7 Q8,9 3,7 Z" fill="#f7f3f7" stroke="#000" stroke-width="1" shape-rendering="geometricPrecision" /><path d="M12,0 L16,3.5 L12,7 Z" fill="#00ff00" stroke="#000" stroke-width="1" shape-rendering="geometricPrecision" /><path d="M11,10 L14,13" fill="none" stroke="#000" stroke-width="2" shape-rendering="geometricPrecision" /><rect x="10" y="9" width="2" height="1" fill="#0000ff"/></g><g transform="translate(10,190)"><rect x="1" y="2" width="10" height="2" fill="#000084"/><rect x="5" y="2" width="2" height="11" fill="#000084"/><rect x="3" y="12" width="6" height="2" fill="#000084"/><rect x="1" y="2" width="1" height="4" fill="#000084"/><rect x="10" y="2" width="1" height="4" fill="#000084"/><path d="M12,0 L16,3.5 L12,7 Z" fill="#00ff00" stroke="#000" stroke-width="1" shape-rendering="geometricPrecision" /></g><g transform="translate(10,213)"><path d="M0.5,3.5 H13.5 V14.5 H0.5 Z" fill="#529a9c" stroke="#000084" stroke-width="1.2" /><path d="M12,0 L16,3.5 L12,7 Z" fill="#00ff00" stroke="#000" stroke-width="1" shape-rendering="geometricPrecision" /></g><g transform="translate(10,236)"><ellipse cx="7" cy="9" rx="6.5" ry="4.5" fill="#529a9c" stroke="#000084" stroke-width="1.2" shape-rendering="geometricPrecision"/><path d="M12,0 L16,3.5 L12,7 Z" fill="#00ff00" stroke="#000" stroke-width="1" shape-rendering="geometricPrecision" /></g><g transform="translate(10,259)"><path d="M2,14 H13 L16,11 V8" fill="#848284" stroke="none" stroke-width="1" shape-rendering="geometricPrecision" /><path d="M0.5,6.5 L3.5,3.5 H11.5 L8.5,6.5 Z" fill="#ffffff" stroke="#000" stroke-width="1" shape-rendering="geometricPrecision" /><rect x="0" y="6" width="9" height="9" fill="#000"/><rect x="1" y="7" width="7" height="7" fill="#008284"/><rect x="2" y="8" width="1" height="1" fill="#c6c3c6"/><rect x="4" y="10" width="1" height="1" fill="#c6c3c6"/><rect x="6" y="8" width="1" height="1" fill="#c6c3c6"/><rect x="2" y="12" width="1" height="1" fill="#c6c3c6"/><rect x="6" y="12" width="1" height="1" fill="#c6c3c6"/><path d="M8.5,6.5 L11.5,3.5 V11 L8.5,14" fill="#008284" stroke="#000" stroke-width="1" shape-rendering="geometricPrecision" /><path d="M12,0 L16,3.5 L12,7 Z" fill="#00ff00" stroke="#000" stroke-width="1" shape-rendering="geometricPrecision" /></g><g transform="translate(10,282)"><path d="M0,11.5 Q2.5,7 5,9.5 Q8,13.5 10,13.5 Q13,13.5 15.5,10" fill="none" stroke="#000084" stroke-width="1.1" shape-rendering="geometricPrecision" /><circle cx="9" cy="8.5" r="1.6" fill="none" stroke="#000084" stroke-width="1" shape-rendering="geometricPrecision"/><rect x="10" y="6" width="1" height="1" fill="#000084"/><rect x="11" y="5" width="1" height="1" fill="#000084"/><path d="M12,0 L16,3.5 L12,7 Z" fill="#00ff00" stroke="#000" stroke-width="1" shape-rendering="geometricPrecision" /></g><g transform="translate(10,305)"><rect x="0" y="10" width="12" height="1" fill="#000084"/><path d="M11,6 L16,10.5 L11,15 Z" fill="#000084" stroke="none" stroke-width="1" shape-rendering="geometricPrecision" /><path d="M12,0 L16,3.5 L12,7 Z" fill="#00ff00" stroke="#000" stroke-width="1" shape-rendering="geometricPrecision" /></g><g transform="translate(10,328)"><path d="M0.5,3.5 H4.5 V7.5 H0.5 Z" fill="none" stroke="#000084" stroke-width="1.2" /><path d="M4.5,5.5 H7.5 V11.5 H10.5" fill="none" stroke="#000084" stroke-width="1.2" /><path d="M10.5,9.5 H14.5 V13.5 H10.5 Z" fill="none" stroke="#000084" stroke-width="1.2" /><path d="M12,0 L16,3.5 L12,7 Z" fill="#00ff00" stroke="#000" stroke-width="1" shape-rendering="geometricPrecision" /></g><g transform="translate(11,361)"><path d="M11,4 Q7,-1 3,3 Q0,7 3,10 Q7,13.5 11,9" fill="none" stroke="#000084" stroke-width="2" shape-rendering="geometricPrecision" /><path d="M9,7 L14,7 L12,11 Z" fill="#000084" stroke="none" stroke-width="1" shape-rendering="geometricPrecision" /></g><g transform="translate(12,382)"><rect x="0" y="1" width="1" height="15" fill="#000084"/><rect x="2" y="2" width="7" height="4" fill="#000"/><rect x="3" y="3" width="5" height="2" fill="#00ffff"/><rect x="2" y="7" width="9" height="4" fill="#000"/><rect x="3" y="8" width="7" height="2" fill="#ffff00"/><rect x="2" y="12" width="5" height="4" fill="#000"/><rect x="3" y="13" width="3" height="2" fill="#00ffff"/><path d="M11,1 L15,4.5 L11,8 Z" fill="#00ff00" stroke="#000" stroke-width="1" shape-rendering="geometricPrecision" /></g><g transform="translate(10,405)"><rect x="0" y="9" width="6" height="6" fill="#000"/><rect x="1" y="10" width="4" height="4" fill="#848284"/><rect x="4" y="4" width="9" height="9" fill="#000"/><rect x="5" y="5" width="7" height="7" fill="#ffff9c"/><path d="M12,0 L16,3.5 L12,7 Z" fill="#00ff00" stroke="#000" stroke-width="1" shape-rendering="geometricPrecision" /></g><g transform="translate(10,436)"><circle cx="6" cy="10" r="5.6" fill="#ffff84" stroke="#000" stroke-width="1" shape-rendering="geometricPrecision"/><path d="M6,10 L6,4.4 A5.6,5.6 0 0 1 11.6,10 Z" fill="#42c3c6" stroke="#000" stroke-width="0.8" shape-rendering="geometricPrecision" /><path d="M6,10 L11.6,10 A5.6,5.6 0 0 1 1.5,13.5 Z" fill="#846194" stroke="#000" stroke-width="0.8" shape-rendering="geometricPrecision" /><path d="M12,0 L16,3.5 L12,7 Z" fill="#00ff00" stroke="#000" stroke-width="1" shape-rendering="geometricPrecision" /></g><g transform="translate(10,467)"><path d="M0,13 L9,5 M2,15 L10,8 M4,16 L11,10" fill="none" stroke="#000" stroke-width="1.1" shape-rendering="geometricPrecision" /><circle cx="11.5" cy="4.5" r="3.6" fill="#840000" shape-rendering="geometricPrecision"/></g><g transform="translate(10,490)"><path d="M1,8.5 H9 M1,11 H9 M1,13.5 H9 M1,6 H7" fill="none" stroke="#848284" stroke-width="1.2" shape-rendering="geometricPrecision" /><path d="M5,5 Q8,0 12,4" fill="none" stroke="#848284" stroke-width="1.5" shape-rendering="geometricPrecision" /><path d="M10,5 L14,5 L12,2 Z" fill="#848284" stroke="none" stroke-width="1" shape-rendering="geometricPrecision" /></g><g transform="translate(11,515)"><path d="M3,13 H12 L15,10 V6" fill="#848284" stroke="none" stroke-width="1" shape-rendering="geometricPrecision" /><path d="M0.5,4.5 L4.5,0.5 H13.5 V9 L9.5,13 H0.5 Z" fill="#000084" stroke="#000084" stroke-width="1" shape-rendering="geometricPrecision" /><rect x="1" y="5" width="8" height="8" fill="#848284"/></g><g transform="translate(10,545)"><rect x="0" y="0" width="15" height="2" fill="#000084"/><rect x="1" y="2" width="13" height="8" fill="#ffffff"/><rect x="1" y="2" width="1" height="8" fill="#000084"/><rect x="13" y="2" width="1" height="8" fill="#000084"/><rect x="1" y="9" width="13" height="1" fill="#000084"/><rect x="4" y="4" width="7" height="1" fill="#000"/><rect x="4" y="6" width="7" height="1" fill="#000"/><path d="M7.5,10 L2,15 M7.5,10 L13,15 M7.5,10 V13" fill="none" stroke="#000" stroke-width="1.2" shape-rendering="geometricPrecision" /></g><rect x="43" y="127" width="1" height="16" fill="#000" /><rect x="40" y="130" width="16" height="1" fill="#000" /><rect x="1258" y="121" width="17" height="111" fill="#dedfde" /><rect x="1258" y="121" width="16" height="16" fill="#dedfde" /><rect x="1258" y="121" width="16" height="1" fill="#000" /><rect x="1258" y="121" width="1" height="16" fill="#000" /><rect x="1259" y="122" width="14" height="1" fill="#9c9e9c" /><rect x="1259" y="122" width="1" height="15" fill="#9c9e9c" /><rect x="1258" y="136" width="16" height="1" fill="#ffffff" /><rect x="1273" y="121" width="1" height="16" fill="#ffffff" /><rect x="1265" y="129" width="1" height="1" fill="#000"/><g transform="translate(1263,126)"><rect x="0" y="0" width="7" height="7" fill="#000"/><rect x="1" y="1" width="5" height="5" fill="#ffffff"/><rect x="2" y="2" width="3" height="3" fill="#c6c3c6"/></g><rect x="1258" y="137" width="16" height="16" fill="#dedfde" /><rect x="1258" y="137" width="16" height="1" fill="#ffffff" /><rect x="1258" y="137" width="1" height="16" fill="#ffffff" /><rect x="1258" y="152" width="16" height="1" fill="#000" /><rect x="1273" y="137" width="1" height="16" fill="#000" /><rect x="1259" y="151" width="14" height="1" fill="#9c9e9c" /><rect x="1272" y="138" width="1" height="14" fill="#9c9e9c" /><rect x="1258" y="153" width="16" height="16" fill="#dedfde" /><rect x="1258" y="153" width="16" height="1" fill="#ffffff" /><rect x="1258" y="153" width="1" height="16" fill="#ffffff" /><rect x="1258" y="168" width="16" height="1" fill="#000" /><rect x="1273" y="153" width="1" height="16" fill="#000" /><rect x="1259" y="167" width="14" height="1" fill="#9c9e9c" /><rect x="1272" y="154" width="1" height="14" fill="#9c9e9c" /><rect x="1258" y="169" width="16" height="16" fill="#dedfde" /><rect x="1258" y="169" width="16" height="1" fill="#ffffff" /><rect x="1258" y="169" width="1" height="16" fill="#ffffff" /><rect x="1258" y="184" width="16" height="1" fill="#000" /><rect x="1273" y="169" width="1" height="16" fill="#000" /><rect x="1259" y="183" width="14" height="1" fill="#9c9e9c" /><rect x="1272" y="170" width="1" height="14" fill="#9c9e9c" /><rect x="1258" y="185" width="16" height="16" fill="#dedfde" /><rect x="1258" y="185" width="16" height="1" fill="#ffffff" /><rect x="1258" y="185" width="1" height="16" fill="#ffffff" /><rect x="1258" y="200" width="16" height="1" fill="#000" /><rect x="1273" y="185" width="1" height="16" fill="#000" /><rect x="1259" y="199" width="14" height="1" fill="#9c9e9c" /><rect x="1272" y="186" width="1" height="14" fill="#9c9e9c" /><rect x="1258" y="201" width="16" height="16" fill="#dedfde" /><rect x="1258" y="201" width="16" height="1" fill="#ffffff" /><rect x="1258" y="201" width="1" height="16" fill="#ffffff" /><rect x="1258" y="216" width="16" height="1" fill="#000" /><rect x="1273" y="201" width="1" height="16" fill="#000" /><rect x="1259" y="215" width="14" height="1" fill="#9c9e9c" /><rect x="1272" y="202" width="1" height="14" fill="#9c9e9c" /><rect x="1258" y="217" width="16" height="16" fill="#dedfde" /><rect x="1258" y="217" width="16" height="1" fill="#ffffff" /><rect x="1258" y="217" width="1" height="16" fill="#ffffff" /><rect x="1258" y="232" width="16" height="1" fill="#000" /><rect x="1273" y="217" width="1" height="16" fill="#000" /><rect x="1259" y="231" width="14" height="1" fill="#9c9e9c" /><rect x="1272" y="218" width="1" height="14" fill="#9c9e9c" /><g transform="translate(1263,142)"><rect x="0" y="0" width="1" height="1" fill="#000"/><rect x="2" y="0" width="6" height="1" fill="#000"/><rect x="0" y="2" width="1" height="1" fill="#000"/><rect x="2" y="2" width="6" height="1" fill="#000"/><rect x="0" y="4" width="1" height="1" fill="#000"/><rect x="2" y="4" width="6" height="1" fill="#000"/><rect x="0" y="6" width="1" height="1" fill="#000"/><rect x="2" y="6" width="6" height="1" fill="#000"/></g><g transform="translate(1263,157)"><rect x="0" y="0" width="3" height="3" fill="#000"/><rect x="1" y="1" width="1" height="1" fill="#ffffff"/><rect x="4" y="0" width="3" height="3" fill="#000"/><rect x="5" y="1" width="1" height="1" fill="#ffffff"/><rect x="0" y="4" width="3" height="3" fill="#000"/><rect x="1" y="5" width="2" height="2" fill="#ffffff"/><rect x="4" y="4" width="3" height="3" fill="#000"/><rect x="5" y="5" width="2" height="2" fill="#ffffff"/></g><g transform="translate(1263,173)"><rect x="1" y="0" width="6" height="4" fill="#000"/><rect x="2" y="1" width="4" height="2" fill="#ffffff"/><rect x="0" y="5" width="8" height="1" fill="#000"/><rect x="0" y="7" width="8" height="1" fill="#000"/></g><g transform="translate(1263,189)"><rect x="0" y="0" width="3" height="3" fill="#000"/><rect x="1" y="1" width="1" height="1" fill="#ffffff"/><rect x="0" y="4" width="3" height="3" fill="#000"/><rect x="1" y="5" width="1" height="1" fill="#ffffff"/><rect x="4" y="0" width="4" height="1" fill="#000"/><rect x="4" y="2" width="4" height="1" fill="#000"/><rect x="4" y="4" width="4" height="1" fill="#000"/><rect x="4" y="6" width="4" height="1" fill="#000"/></g><g transform="translate(1263,205)"><rect x="1" y="0" width="6" height="5" fill="#000"/><rect x="2" y="1" width="4" height="3" fill="#ffffff"/><rect x="0" y="6" width="2" height="1" fill="#000"/><rect x="6" y="6" width="2" height="1" fill="#000"/><rect x="3" y="5" width="2" height="2" fill="#000"/></g><path d="M1262,228 L1270,228 L1266,224 Z" fill="#000" stroke="none" stroke-width="1" /><rect x="1258" y="233" width="16" height="572" fill="#efefef" /><rect x="1258" y="371" width="16" height="298" fill="#dedfde" /><rect x="1258" y="371" width="15" height="1" fill="#ffffff" /><rect x="1258" y="371" width="1" height="297" fill="#ffffff" /><rect x="1273" y="371" width="1" height="298" fill="#000" /><rect x="1258" y="668" width="16" height="1" fill="#000" /><rect x="1272" y="372" width="1" height="296" fill="#9c9e9c" /><rect x="1259" y="667" width="14" height="1" fill="#9c9e9c" /><rect x="1258" y="805" width="16" height="15" fill="#dedfde" /><rect x="1258" y="805" width="16" height="1" fill="#ffffff" /><rect x="1258" y="805" width="1" height="15" fill="#ffffff" /><rect x="1258" y="819" width="16" height="1" fill="#000" /><rect x="1273" y="805" width="1" height="15" fill="#000" /><rect x="1259" y="818" width="14" height="1" fill="#9c9e9c" /><rect x="1272" y="806" width="1" height="13" fill="#9c9e9c" /><path d="M1262,810 L1270,810 L1266,814 Z" fill="#000" stroke="none" stroke-width="1" /><rect x="1258" y="820" width="16" height="5" fill="#000" /><rect x="34" y="825" width="1224" height="16" fill="#dedfde" /><rect x="33" y="825" width="16" height="1" fill="#000" /><rect x="34" y="826" width="15" height="14" fill="#dedfde" /><rect x="34" y="826" width="1" height="14" fill="#000" /><rect x="34" y="826" width="15" height="1" fill="#9c9e9c" /><rect x="35" y="827" width="1" height="13" fill="#9c9e9c" /><g transform="translate(38,829)"><rect x="0" y="0" width="6" height="6" fill="#000"/><rect x="1" y="1" width="4" height="4" fill="#ffffff"/><rect x="3" y="3" width="6" height="6" fill="#000"/><rect x="4" y="4" width="4" height="4" fill="#ffffff"/><rect x="2" y="2" width="2" height="2" fill="#c6c3c6"/></g><rect x="49" y="826" width="16" height="14" fill="#dedfde" /><rect x="49" y="826" width="16" height="1" fill="#ffffff" /><rect x="49" y="826" width="1" height="14" fill="#ffffff" /><rect x="64" y="826" width="1" height="14" fill="#000" /><rect x="49" y="839" width="16" height="1" fill="#000" /><rect x="63" y="827" width="1" height="12" fill="#9c9e9c" /><rect x="50" y="838" width="14" height="1" fill="#9c9e9c" /><rect x="65" y="826" width="16" height="14" fill="#dedfde" /><rect x="65" y="826" width="16" height="1" fill="#ffffff" /><rect x="65" y="826" width="1" height="14" fill="#ffffff" /><rect x="80" y="826" width="1" height="14" fill="#000" /><rect x="65" y="839" width="16" height="1" fill="#000" /><rect x="79" y="827" width="1" height="12" fill="#9c9e9c" /><rect x="66" y="838" width="14" height="1" fill="#9c9e9c" /><rect x="81" y="826" width="16" height="14" fill="#dedfde" /><rect x="81" y="826" width="16" height="1" fill="#ffffff" /><rect x="81" y="826" width="1" height="14" fill="#ffffff" /><rect x="96" y="826" width="1" height="14" fill="#000" /><rect x="81" y="839" width="16" height="1" fill="#000" /><rect x="95" y="827" width="1" height="12" fill="#9c9e9c" /><rect x="82" y="838" width="14" height="1" fill="#9c9e9c" /><rect x="97" y="826" width="16" height="14" fill="#dedfde" /><rect x="97" y="826" width="16" height="1" fill="#ffffff" /><rect x="97" y="826" width="1" height="14" fill="#ffffff" /><rect x="112" y="826" width="1" height="14" fill="#000" /><rect x="97" y="839" width="16" height="1" fill="#000" /><rect x="111" y="827" width="1" height="12" fill="#9c9e9c" /><rect x="98" y="838" width="14" height="1" fill="#9c9e9c" /><rect x="113" y="826" width="16" height="14" fill="#dedfde" /><rect x="113" y="826" width="16" height="1" fill="#ffffff" /><rect x="113" y="826" width="1" height="14" fill="#ffffff" /><rect x="128" y="826" width="1" height="14" fill="#000" /><rect x="113" y="839" width="16" height="1" fill="#000" /><rect x="127" y="827" width="1" height="12" fill="#9c9e9c" /><rect x="114" y="838" width="14" height="1" fill="#9c9e9c" /><rect x="129" y="826" width="16" height="14" fill="#dedfde" /><rect x="129" y="826" width="16" height="1" fill="#ffffff" /><rect x="129" y="826" width="1" height="14" fill="#ffffff" /><rect x="144" y="826" width="1" height="14" fill="#000" /><rect x="129" y="839" width="16" height="1" fill="#000" /><rect x="143" y="827" width="1" height="12" fill="#9c9e9c" /><rect x="130" y="838" width="14" height="1" fill="#9c9e9c" /><g transform="translate(54,829)"><rect x="0" y="0" width="6" height="7" fill="#000"/><rect x="1" y="1" width="4" height="5" fill="#ffffff"/><rect x="2" y="2" width="2" height="3" fill="#c6c3c6"/></g><g transform="translate(70,829)"><rect x="0" y="0" width="8" height="2" fill="#000"/><rect x="0" y="0" width="2" height="8" fill="#000"/><rect x="3" y="3" width="5" height="2" fill="#000"/><rect x="3" y="3" width="2" height="5" fill="#000"/><rect x="6" y="6" width="2" height="2" fill="#000"/></g><g transform="translate(85,829)"><rect x="0" y="0" width="1" height="8" fill="#848284"/><path d="M6,0 L2,4 L6,8 Z" fill="#848284" stroke="none" stroke-width="1" shape-rendering="geometricPrecision" /></g><g transform="translate(103,829)"><path d="M5,0 L1,4 L5,8 Z" fill="#848284" stroke="none" stroke-width="1" shape-rendering="geometricPrecision" /></g><g transform="translate(119,829)"><path d="M1,0 L5,4 L1,8 Z" fill="#848284" stroke="none" stroke-width="1" shape-rendering="geometricPrecision" /></g><g transform="translate(134,829)"><path d="M0,0 L4,4 L0,8 Z" fill="#848284" stroke="none" stroke-width="1" shape-rendering="geometricPrecision" /><rect x="5" y="0" width="1" height="8" fill="#848284"/></g><rect x="33" y="840" width="113" height="1" fill="#000" /><path d="M145.5,825.5 L153,840 L219.5,840 L226.5,825.5" fill="#fff" stroke="#000" stroke-width="1.3" shape-rendering="geometricPrecision"/><rect x="226" y="825" width="200" height="1" fill="#000" /><text x="155.30" y="837" font-family="Liberation Sans" font-size="13.66" font-weight="bold" fill="#000" textLength="60.45" lengthAdjust="spacingAndGlyphs" >Pagina 1</text><rect x="425" y="825" width="1" height="16" fill="#000" /><rect x="425" y="840" width="23" height="1" fill="#000" /><rect x="426" y="826" width="5" height="14" fill="#dedfde" /><rect x="426" y="826" width="5" height="1" fill="#ffffff" /><rect x="426" y="826" width="1" height="14" fill="#ffffff" /><rect x="431" y="825" width="1" height="16" fill="#000" /><rect x="432" y="826" width="15" height="14" fill="#dedfde" /><rect x="432" y="826" width="15" height="1" fill="#ffffff" /><rect x="432" y="826" width="1" height="14" fill="#ffffff" /><rect x="447" y="825" width="1" height="16" fill="#000" /><rect x="446" y="827" width="1" height="13" fill="#9c9e9c" /><rect x="433" y="839" width="14" height="1" fill="#9c9e9c" /><path d="M441,829 L437,833 L441,837 Z" fill="#000" stroke="none" stroke-width="1" shape-rendering="geometricPrecision" /><rect x="448" y="825" width="790" height="16" fill="#efefef" /><rect x="662" y="825" width="365" height="16" fill="#dedfde" /><rect x="662" y="825" width="364" height="1" fill="#ffffff" /><rect x="662" y="825" width="1" height="15" fill="#ffffff" /><rect x="662" y="840" width="365" height="1" fill="#000" /><rect x="1026" y="825" width="1" height="16" fill="#000" /><rect x="663" y="839" width="363" height="1" fill="#9c9e9c" /><rect x="1025" y="826" width="1" height="14" fill="#9c9e9c" /><rect x="1238" y="825" width="15" height="16" fill="#dedfde" /><rect x="1238" y="825" width="15" height="1" fill="#ffffff" /><rect x="1238" y="825" width="1" height="15" fill="#ffffff" /><rect x="1238" y="840" width="15" height="1" fill="#000" /><rect x="1239" y="839" width="14" height="1" fill="#9c9e9c" /><rect x="1252" y="826" width="1" height="14" fill="#9c9e9c" /><path d="M1243,829 L1247,833 L1243,837 Z" fill="#000" stroke="none" stroke-width="1" shape-rendering="geometricPrecision" /><rect x="1253" y="825" width="5" height="16" fill="#000" /><rect x="1258" y="825" width="17" height="16" fill="#dedfde" /><rect x="84.5" y="845.5" width="22" height="22" fill="#bdd7e7" stroke="#186594" stroke-width="1"/><rect x="161.5" y="845.5" width="22" height="22" fill="#bdd7e7" stroke="#186594" stroke-width="1"/><rect x="238.5" y="845.5" width="22" height="22" fill="#bdd7e7" stroke="#186594" stroke-width="1"/><rect x="261.5" y="845.5" width="22" height="22" fill="#bdd7e7" stroke="#186594" stroke-width="1"/><rect x="338.5" y="845.5" width="22" height="22" fill="#bdd7e7" stroke="#186594" stroke-width="1"/><rect x="361.5" y="845.5" width="22" height="22" fill="#bdd7e7" stroke="#186594" stroke-width="1"/><rect x="384.5" y="845.5" width="22" height="22" fill="#bdd7e7" stroke="#186594" stroke-width="1"/><rect x="415.5" y="845.5" width="22" height="22" fill="#bdd7e7" stroke="#186594" stroke-width="1"/><rect x="55" y="845" width="1" height="23" fill="#9c9e9c" /><rect x="56" y="845" width="1" height="23" fill="#ffffff" /><rect x="133" y="845" width="1" height="23" fill="#9c9e9c" /><rect x="134" y="845" width="1" height="23" fill="#ffffff" /><rect x="210" y="845" width="1" height="23" fill="#9c9e9c" /><rect x="211" y="845" width="1" height="23" fill="#ffffff" /><rect x="333" y="845" width="1" height="23" fill="#9c9e9c" /><rect x="334" y="845" width="1" height="23" fill="#ffffff" /><rect x="410" y="845" width="1" height="23" fill="#9c9e9c" /><rect x="411" y="845" width="1" height="23" fill="#ffffff" /><rect x="464" y="845" width="1" height="23" fill="#9c9e9c" /><rect x="465" y="845" width="1" height="23" fill="#ffffff" /><rect x="564" y="845" width="1" height="23" fill="#9c9e9c" /><rect x="565" y="845" width="1" height="23" fill="#ffffff" /><g transform="translate(10,850)"><path d="M5.5,1.5 H14.5 L9.5,5.5 L14.5,11.5 H1.5 V5.5 Z" fill="none" stroke="#000" stroke-width="1" /><rect x="4.0" y="0.0" width="3" height="3" fill="#000084"/><rect x="5.0" y="1.0" width="1" height="1" fill="#ffffff"/><rect x="13.0" y="0.0" width="3" height="3" fill="#000084"/><rect x="14.0" y="1.0" width="1" height="1" fill="#ffffff"/><rect x="0.0" y="4.0" width="3" height="3" fill="#000084"/><rect x="1.0" y="5.0" width="1" height="1" fill="#ffffff"/><rect x="8.0" y="4.0" width="3" height="3" fill="#000084"/><rect x="9.0" y="5.0" width="1" height="1" fill="#ffffff"/><rect x="0.0" y="10.0" width="3" height="3" fill="#000084"/><rect x="1.0" y="11.0" width="1" height="1" fill="#ffffff"/><rect x="13.0" y="10.0" width="3" height="3" fill="#000084"/><rect x="14.0" y="11.0" width="1" height="1" fill="#ffffff"/></g><g transform="translate(34,848)"><path d="M2,14 L5,11" fill="none" stroke="#000" stroke-width="1.2" shape-rendering="geometricPrecision" /><rect x="1" y="13" width="2" height="2" fill="#00ffff"/><path d="M4,12 L12,3 L15,5 L7,14 Z" fill="#ffff00" stroke="#000" stroke-width="1.2" shape-rendering="geometricPrecision" /><path d="M12,3 L14,1 L16,3 L15,5" fill="#000" stroke="none" stroke-width="1" shape-rendering="geometricPrecision" /></g><g transform="translate(64,848)"><path d="M0,13 L9,5 M2,15 L10,8 M4,16 L11,10" fill="none" stroke="#000" stroke-width="1.1" shape-rendering="geometricPrecision" /><circle cx="11.5" cy="4" r="3.6" fill="#840000" shape-rendering="geometricPrecision"/><path d="M9,12 V6 Q10,5 11,6 V9 H14 Q15,10 15,12 V14 H8 Z" fill="#ffffff" stroke="#000" stroke-width="0.8" shape-rendering="geometricPrecision" /><rect x="8" y="13" width="7" height="2" fill="#ffff00"/></g><g transform="translate(87,848)"><path d="M1,8.5 H10 M1,11 H10 M1,13.5 H10 M1,6 H8" fill="none" stroke="#000" stroke-width="1.4" shape-rendering="geometricPrecision" /><path d="M5,5 Q9,-1 14,4" fill="none" stroke="#000084" stroke-width="1.6" shape-rendering="geometricPrecision" /><path d="M12,5 L16,5 L14,1.5 Z" fill="#000084" stroke="none" stroke-width="1" shape-rendering="geometricPrecision" /><path d="M11,13 V7 Q12,6 13,7 V10 H16 Q17,11 17,13 V15 H10 Z" fill="#ffffff" stroke="#000" stroke-width="0.8" shape-rendering="geometricPrecision" /><rect x="10" y="14" width="7" height="2" fill="#ffff00"/></g><g transform="translate(110,848)"><path d="M5,2 Q1,2 2,7" fill="none" stroke="#000084" stroke-width="1.4" shape-rendering="geometricPrecision" /><path d="M0,5 L4,5 L2,8 Z" fill="#000084" stroke="none" stroke-width="1" shape-rendering="geometricPrecision" /><rect x="4" y="4" width="4" height="4" fill="#000084"/><rect x="5" y="5" width="2" height="2" fill="#ffffff"/><rect x="5" y="7" width="11" height="9" fill="#000"/><rect x="6" y="8" width="9" height="7" fill="#848284"/><path d="M10,13 V7 Q11,6 12,7 V10 H15 Q16,11 16,13 V15 H9 Z" fill="#ffffff" stroke="#000" stroke-width="0.8" shape-rendering="geometricPrecision" /><rect x="9" y="14" width="7" height="2" fill="#ffff00"/></g><g transform="translate(141,849)"><rect x="0" y="0" width="1" height="1" fill="#000"/><rect x="0" y="3" width="1" height="1" fill="#000"/><rect x="0" y="6" width="1" height="1" fill="#000"/><rect x="0" y="9" width="1" height="1" fill="#000"/><rect x="0" y="12" width="1" height="1" fill="#000"/><rect x="3" y="0" width="1" height="1" fill="#000"/><rect x="3" y="3" width="1" height="1" fill="#000"/><rect x="3" y="6" width="1" height="1" fill="#000"/><rect x="3" y="9" width="1" height="1" fill="#000"/><rect x="3" y="12" width="1" height="1" fill="#000"/><rect x="6" y="0" width="1" height="1" fill="#000"/><rect x="6" y="3" width="1" height="1" fill="#000"/><rect x="6" y="6" width="1" height="1" fill="#000"/><rect x="6" y="9" width="1" height="1" fill="#000"/><rect x="6" y="12" width="1" height="1" fill="#000"/><rect x="9" y="0" width="1" height="1" fill="#000"/><rect x="9" y="3" width="1" height="1" fill="#000"/><rect x="9" y="6" width="1" height="1" fill="#000"/><rect x="9" y="9" width="1" height="1" fill="#000"/><rect x="9" y="12" width="1" height="1" fill="#000"/><rect x="12" y="0" width="1" height="1" fill="#000"/><rect x="12" y="3" width="1" height="1" fill="#000"/><rect x="12" y="6" width="1" height="1" fill="#000"/><rect x="12" y="9" width="1" height="1" fill="#000"/><rect x="12" y="12" width="1" height="1" fill="#000"/></g><g transform="translate(164,849)"><path d="M7.5,0 V16 M0,11.5 H16" fill="none" stroke="#000084" stroke-width="1" stroke-dasharray="2,1"/></g><g transform="translate(187,849)"><rect x="4" y="4" width="8" height="7" fill="#848284"/><path d="M4.5,0 V16 M11.5,0 V16 M0,3.5 H16 M0,11.5 H16" fill="none" stroke="#000084" stroke-width="1" stroke-dasharray="2,1"/><rect x="4" y="3" width="8" height="1" fill="#000"/><rect x="4" y="11" width="8" height="1" fill="#000"/></g><g transform="translate(219,850)"><rect x="0" y="0" width="1" height="1" fill="#000"/><rect x="0" y="3" width="1" height="1" fill="#000"/><rect x="0" y="6" width="1" height="1" fill="#000"/><rect x="0" y="9" width="1" height="1" fill="#000"/><rect x="0" y="12" width="1" height="1" fill="#000"/><rect x="3" y="0" width="1" height="1" fill="#000"/><rect x="3" y="3" width="1" height="1" fill="#000"/><rect x="3" y="6" width="1" height="1" fill="#000"/><rect x="3" y="9" width="1" height="1" fill="#000"/><rect x="3" y="12" width="1" height="1" fill="#000"/><rect x="6" y="0" width="1" height="1" fill="#000"/><rect x="6" y="3" width="1" height="1" fill="#000"/><rect x="6" y="6" width="1" height="1" fill="#000"/><rect x="6" y="9" width="1" height="1" fill="#000"/><rect x="6" y="12" width="1" height="1" fill="#000"/><rect x="9" y="0" width="1" height="1" fill="#000"/><rect x="9" y="3" width="1" height="1" fill="#000"/><rect x="9" y="6" width="1" height="1" fill="#000"/><rect x="9" y="9" width="1" height="1" fill="#000"/><rect x="9" y="12" width="1" height="1" fill="#000"/><rect x="12" y="0" width="1" height="1" fill="#000"/><rect x="12" y="3" width="1" height="1" fill="#000"/><rect x="12" y="6" width="1" height="1" fill="#000"/><rect x="12" y="9" width="1" height="1" fill="#000"/><rect x="12" y="12" width="1" height="1" fill="#000"/><path d="M10,4 V1.5 Q10,-0.5 12,-0.5 Q14,-0.5 14,1.5 V4" fill="none" stroke="#840000" stroke-width="2" shape-rendering="geometricPrecision" /><rect x="9" y="3" width="2" height="1" fill="#ffffff"/><rect x="13" y="3" width="2" height="1" fill="#ffffff"/></g><g transform="translate(241,849)"><path d="M4.5,0 V16 M0,10.5 H16" fill="none" stroke="#000084" stroke-width="1" stroke-dasharray="2,1"/><path d="M12,5 V2.5 Q12,0.5 14,0.5 Q16,0.5 16,2.5 V5" fill="none" stroke="#840000" stroke-width="2" shape-rendering="geometricPrecision" /><rect x="11" y="4" width="2" height="1" fill="#ffffff"/><rect x="15" y="4" width="2" height="1" fill="#ffffff"/></g><g transform="translate(264,850)"><path d="M0.5,0.5 H6 L9.5,4 V12.5 H0.5 Z" fill="#ffffff" stroke="#000084" stroke-width="1" /><path d="M9.5,4 V12.5 H0.5" fill="none" stroke="#000" stroke-width="1" stroke-dasharray="1,1"/><path d="M6,0 L10,4 L6,4 Z" fill="#000" stroke="none" stroke-width="1" /><path d="M11,4 V1.5 Q11,-0.5 13,-0.5 Q15,-0.5 15,1.5 V4" fill="none" stroke="#840000" stroke-width="2" shape-rendering="geometricPrecision" /><rect x="10" y="3" width="2" height="1" fill="#ffffff"/><rect x="14" y="3" width="2" height="1" fill="#ffffff"/></g><g transform="translate(288,849)"><rect x="0" y="5" width="10" height="9" fill="#000084"/><rect x="1" y="6" width="8" height="7" fill="#848284"/><path d="M10,5 V2.5 Q10,0.5 12,0.5 Q14,0.5 14,2.5 V5" fill="none" stroke="#840000" stroke-width="2" shape-rendering="geometricPrecision" /><rect x="9" y="4" width="2" height="1" fill="#ffffff"/><rect x="13" y="4" width="2" height="1" fill="#ffffff"/></g><g transform="translate(310,849)"><rect x="1" y="6" width="9" height="8" fill="#000"/><rect x="2" y="7" width="7" height="6" fill="#848284"/><rect x="0" y="5" width="3" height="3" fill="#000084"/><rect x="1" y="6" width="1" height="1" fill="#ffffff"/><rect x="8" y="5" width="3" height="3" fill="#000084"/><rect x="9" y="6" width="1" height="1" fill="#ffffff"/><rect x="0" y="12" width="3" height="3" fill="#000084"/><rect x="1" y="13" width="1" height="1" fill="#ffffff"/><rect x="8" y="12" width="3" height="3" fill="#000084"/><rect x="9" y="13" width="1" height="1" fill="#ffffff"/><path d="M11,5 V2.5 Q11,0.5 13,0.5 Q15,0.5 15,2.5 V5" fill="none" stroke="#840000" stroke-width="2" shape-rendering="geometricPrecision" /><rect x="10" y="4" width="2" height="1" fill="#ffffff"/><rect x="14" y="4" width="2" height="1" fill="#ffffff"/></g><g transform="translate(342,849)"><path d="M0.5,0.5 H15.5 V15.5 H0.5 Z" fill="#ffffff" stroke="#000" stroke-width="1" stroke-dasharray="1,1"/><text x="1.5" y="7.5" font-family="Liberation Sans" font-weight="bold" font-size="7" fill="#000084" textLength="13" lengthAdjust="spacingAndGlyphs">ABC</text><rect x="2" y="11" width="3" height="1" fill="#0000ff"/></g><g transform="translate(365,849)"><path d="M0.5,0.5 H15.5 V15.5 H0.5 Z" fill="#ffffff" stroke="#000" stroke-width="1" stroke-dasharray="1,1"/><text x="1.5" y="7.5" font-family="Liberation Sans" font-weight="bold" font-size="7" fill="#000084" textLength="13" lengthAdjust="spacingAndGlyphs">ABC</text><path d="M7,9 L7,15 L9,13 L11,15" fill="#ffffff" stroke="#000" stroke-width="0.8" shape-rendering="geometricPrecision" /></g><g transform="translate(388,849)"><path d="M0.5,0.5 H15.5 V15.5 H0.5 Z" fill="#ffffff" stroke="#000" stroke-width="1" stroke-dasharray="1,1"/><text x="1.5" y="7.5" font-family="Liberation Sans" font-weight="bold" font-size="7" fill="#000084" textLength="13" lengthAdjust="spacingAndGlyphs">ABC</text><rect x="2" y="12" width="3" height="1" fill="#0000ff"/><path d="M9,13 V7 Q10,6 11,7 V10 H14 Q15,11 15,13 V15 H8 Z" fill="#ffffff" stroke="#000" stroke-width="0.8" shape-rendering="geometricPrecision" /><rect x="8" y="14" width="7" height="2" fill="#ffff00"/></g><g transform="translate(418,849)"><rect x="2" y="3" width="12" height="9" fill="#848284"/><rect x="2" y="3" width="12" height="1" fill="#000"/><rect x="2" y="11" width="12" height="1" fill="#000"/><rect x="2" y="3" width="1" height="9" fill="#000"/><rect x="13" y="3" width="1" height="9" fill="#000"/><rect x="0" y="1" width="4" height="4" fill="#000"/><rect x="12" y="1" width="4" height="4" fill="#000"/><rect x="0" y="10" width="4" height="4" fill="#000"/><rect x="12" y="10" width="4" height="4" fill="#000"/></g><g transform="translate(444,849)"><rect x="2" y="4" width="11" height="8" fill="#848284"/><rect x="2" y="3" width="11" height="1" fill="#000"/><rect x="2" y="11" width="11" height="1" fill="#000"/><rect x="0" y="1" width="4" height="4" fill="#000"/><rect x="10" y="1" width="4" height="4" fill="#000"/><rect x="0" y="10" width="4" height="4" fill="#000"/><rect x="10" y="10" width="4" height="4" fill="#000"/></g><g transform="translate(472,849)"><rect x="1" y="1" width="14" height="14" fill="#ffffff"/><rect x="1" y="1" width="1" height="1" fill="#000"/><rect x="1" y="5" width="1" height="1" fill="#000"/><rect x="1" y="9" width="1" height="1" fill="#000"/><rect x="1" y="13" width="1" height="1" fill="#000"/><rect x="2" y="2" width="1" height="1" fill="#000"/><rect x="2" y="6" width="1" height="1" fill="#000"/><rect x="2" y="10" width="1" height="1" fill="#000"/><rect x="2" y="14" width="1" height="1" fill="#000"/><rect x="3" y="3" width="1" height="1" fill="#000"/><rect x="3" y="7" width="1" height="1" fill="#000"/><rect x="3" y="11" width="1" height="1" fill="#000"/><rect x="4" y="4" width="1" height="1" fill="#000"/><rect x="4" y="8" width="1" height="1" fill="#000"/><rect x="4" y="12" width="1" height="1" fill="#000"/><rect x="5" y="1" width="1" height="1" fill="#000"/><rect x="5" y="5" width="1" height="1" fill="#000"/><rect x="5" y="9" width="1" height="1" fill="#000"/><rect x="5" y="13" width="1" height="1" fill="#000"/><rect x="6" y="2" width="1" height="1" fill="#000"/><rect x="6" y="6" width="1" height="1" fill="#000"/><rect x="6" y="10" width="1" height="1" fill="#000"/><rect x="6" y="14" width="1" height="1" fill="#000"/><rect x="7" y="3" width="1" height="1" fill="#000"/><rect x="7" y="7" width="1" height="1" fill="#000"/><rect x="7" y="11" width="1" height="1" fill="#000"/><rect x="8" y="4" width="1" height="1" fill="#000"/><rect x="8" y="8" width="1" height="1" fill="#000"/><rect x="8" y="12" width="1" height="1" fill="#000"/><rect x="9" y="1" width="1" height="1" fill="#000"/><rect x="9" y="5" width="1" height="1" fill="#000"/><rect x="9" y="9" width="1" height="1" fill="#000"/><rect x="9" y="13" width="1" height="1" fill="#000"/><rect x="10" y="2" width="1" height="1" fill="#000"/><rect x="10" y="6" width="1" height="1" fill="#000"/><rect x="10" y="10" width="1" height="1" fill="#000"/><rect x="10" y="14" width="1" height="1" fill="#000"/><rect x="11" y="3" width="1" height="1" fill="#000"/><rect x="11" y="7" width="1" height="1" fill="#000"/><rect x="11" y="11" width="1" height="1" fill="#000"/><rect x="12" y="4" width="1" height="1" fill="#000"/><rect x="12" y="8" width="1" height="1" fill="#000"/><rect x="12" y="12" width="1" height="1" fill="#000"/><rect x="13" y="1" width="1" height="1" fill="#000"/><rect x="13" y="5" width="1" height="1" fill="#000"/><rect x="13" y="9" width="1" height="1" fill="#000"/><rect x="13" y="13" width="1" height="1" fill="#000"/><rect x="14" y="2" width="1" height="1" fill="#000"/><rect x="14" y="6" width="1" height="1" fill="#000"/><rect x="14" y="10" width="1" height="1" fill="#000"/><rect x="14" y="14" width="1" height="1" fill="#000"/><rect x="5" y="10" width="7" height="4" fill="#848284"/><rect x="2" y="6" width="3" height="2" fill="#000"/><rect x="11" y="6" width="3" height="2" fill="#000"/><rect x="0" y="0" width="1" height="1" fill="#000"/><rect x="0" y="15" width="1" height="1" fill="#000"/><rect x="2" y="0" width="1" height="1" fill="#000"/><rect x="2" y="15" width="1" height="1" fill="#000"/><rect x="4" y="0" width="1" height="1" fill="#000"/><rect x="4" y="15" width="1" height="1" fill="#000"/><rect x="6" y="0" width="1" height="1" fill="#000"/><rect x="6" y="15" width="1" height="1" fill="#000"/><rect x="8" y="0" width="1" height="1" fill="#000"/><rect x="8" y="15" width="1" height="1" fill="#000"/><rect x="10" y="0" width="1" height="1" fill="#000"/><rect x="10" y="15" width="1" height="1" fill="#000"/><rect x="12" y="0" width="1" height="1" fill="#000"/><rect x="12" y="15" width="1" height="1" fill="#000"/><rect x="14" y="0" width="1" height="1" fill="#000"/><rect x="14" y="15" width="1" height="1" fill="#000"/><rect x="0" y="0" width="1" height="1" fill="#000"/><rect x="15" y="0" width="1" height="1" fill="#000"/><rect x="0" y="2" width="1" height="1" fill="#000"/><rect x="15" y="2" width="1" height="1" fill="#000"/><rect x="0" y="4" width="1" height="1" fill="#000"/><rect x="15" y="4" width="1" height="1" fill="#000"/><rect x="0" y="6" width="1" height="1" fill="#000"/><rect x="15" y="6" width="1" height="1" fill="#000"/><rect x="0" y="8" width="1" height="1" fill="#000"/><rect x="15" y="8" width="1" height="1" fill="#000"/><rect x="0" y="10" width="1" height="1" fill="#000"/><rect x="15" y="10" width="1" height="1" fill="#000"/><rect x="0" y="12" width="1" height="1" fill="#000"/><rect x="15" y="12" width="1" height="1" fill="#000"/><rect x="0" y="14" width="1" height="1" fill="#000"/><rect x="15" y="14" width="1" height="1" fill="#000"/><path d="M0.5,0.5 L15.5,15.5 M15.5,0.5 L0.5,15.5" fill="none" stroke="#b01818" stroke-width="1" shape-rendering="geometricPrecision" /></g><g transform="translate(495,849)"><rect x="1" y="1" width="14" height="14" fill="#000"/><rect x="1" y="1" width="2" height="2" fill="#ffffff"/><rect x="3" y="4" width="2" height="2" fill="#ffffff"/><rect x="1" y="7" width="2" height="2" fill="#ffffff"/><rect x="3" y="10" width="2" height="2" fill="#ffffff"/><rect x="1" y="13" width="2" height="2" fill="#ffffff"/><rect x="5" y="1" width="2" height="2" fill="#ffffff"/><rect x="7" y="4" width="2" height="2" fill="#ffffff"/><rect x="5" y="7" width="2" height="2" fill="#ffffff"/><rect x="7" y="10" width="2" height="2" fill="#ffffff"/><rect x="5" y="13" width="2" height="2" fill="#ffffff"/><rect x="9" y="1" width="2" height="2" fill="#ffffff"/><rect x="11" y="4" width="2" height="2" fill="#ffffff"/><rect x="9" y="7" width="2" height="2" fill="#ffffff"/><rect x="11" y="10" width="2" height="2" fill="#ffffff"/><rect x="9" y="13" width="2" height="2" fill="#ffffff"/><rect x="13" y="1" width="2" height="2" fill="#ffffff"/><rect x="15" y="4" width="2" height="2" fill="#ffffff"/><rect x="13" y="7" width="2" height="2" fill="#ffffff"/><rect x="15" y="10" width="2" height="2" fill="#ffffff"/><rect x="13" y="13" width="2" height="2" fill="#ffffff"/><rect x="0" y="0" width="1" height="1" fill="#000"/><rect x="0" y="15" width="1" height="1" fill="#000"/><rect x="2" y="0" width="1" height="1" fill="#000"/><rect x="2" y="15" width="1" height="1" fill="#000"/><rect x="4" y="0" width="1" height="1" fill="#000"/><rect x="4" y="15" width="1" height="1" fill="#000"/><rect x="6" y="0" width="1" height="1" fill="#000"/><rect x="6" y="15" width="1" height="1" fill="#000"/><rect x="8" y="0" width="1" height="1" fill="#000"/><rect x="8" y="15" width="1" height="1" fill="#000"/><rect x="10" y="0" width="1" height="1" fill="#000"/><rect x="10" y="15" width="1" height="1" fill="#000"/><rect x="12" y="0" width="1" height="1" fill="#000"/><rect x="12" y="15" width="1" height="1" fill="#000"/><rect x="14" y="0" width="1" height="1" fill="#000"/><rect x="14" y="15" width="1" height="1" fill="#000"/><rect x="0" y="0" width="1" height="1" fill="#000"/><rect x="15" y="0" width="1" height="1" fill="#000"/><rect x="0" y="2" width="1" height="1" fill="#000"/><rect x="15" y="2" width="1" height="1" fill="#000"/><rect x="0" y="4" width="1" height="1" fill="#000"/><rect x="15" y="4" width="1" height="1" fill="#000"/><rect x="0" y="6" width="1" height="1" fill="#000"/><rect x="15" y="6" width="1" height="1" fill="#000"/><rect x="0" y="8" width="1" height="1" fill="#000"/><rect x="15" y="8" width="1" height="1" fill="#000"/><rect x="0" y="10" width="1" height="1" fill="#000"/><rect x="15" y="10" width="1" height="1" fill="#000"/><rect x="0" y="12" width="1" height="1" fill="#000"/><rect x="15" y="12" width="1" height="1" fill="#000"/><rect x="0" y="14" width="1" height="1" fill="#000"/><rect x="15" y="14" width="1" height="1" fill="#000"/><path d="M0.5,0.5 L15.5,15.5 M15.5,0.5 L0.5,15.5" fill="none" stroke="#b01818" stroke-width="1" shape-rendering="geometricPrecision" /></g><g transform="translate(518,849)"><rect x="1" y="1" width="14" height="14" fill="#ffffff"/><text x="1.5" y="7" font-family="Liberation Sans" font-weight="bold" font-size="6.5" fill="#000" textLength="13" lengthAdjust="spacingAndGlyphs">ABC</text><text x="1.5" y="14" font-family="Liberation Sans" font-weight="bold" font-size="6.5" fill="#000" textLength="13" lengthAdjust="spacingAndGlyphs">XYZ</text><rect x="0" y="0" width="1" height="1" fill="#000"/><rect x="0" y="15" width="1" height="1" fill="#000"/><rect x="2" y="0" width="1" height="1" fill="#000"/><rect x="2" y="15" width="1" height="1" fill="#000"/><rect x="4" y="0" width="1" height="1" fill="#000"/><rect x="4" y="15" width="1" height="1" fill="#000"/><rect x="6" y="0" width="1" height="1" fill="#000"/><rect x="6" y="15" width="1" height="1" fill="#000"/><rect x="8" y="0" width="1" height="1" fill="#000"/><rect x="8" y="15" width="1" height="1" fill="#000"/><rect x="10" y="0" width="1" height="1" fill="#000"/><rect x="10" y="15" width="1" height="1" fill="#000"/><rect x="12" y="0" width="1" height="1" fill="#000"/><rect x="12" y="15" width="1" height="1" fill="#000"/><rect x="14" y="0" width="1" height="1" fill="#000"/><rect x="14" y="15" width="1" height="1" fill="#000"/><rect x="0" y="0" width="1" height="1" fill="#000"/><rect x="15" y="0" width="1" height="1" fill="#000"/><rect x="0" y="2" width="1" height="1" fill="#000"/><rect x="15" y="2" width="1" height="1" fill="#000"/><rect x="0" y="4" width="1" height="1" fill="#000"/><rect x="15" y="4" width="1" height="1" fill="#000"/><rect x="0" y="6" width="1" height="1" fill="#000"/><rect x="15" y="6" width="1" height="1" fill="#000"/><rect x="0" y="8" width="1" height="1" fill="#000"/><rect x="15" y="8" width="1" height="1" fill="#000"/><rect x="0" y="10" width="1" height="1" fill="#000"/><rect x="15" y="10" width="1" height="1" fill="#000"/><rect x="0" y="12" width="1" height="1" fill="#000"/><rect x="15" y="12" width="1" height="1" fill="#000"/><rect x="0" y="14" width="1" height="1" fill="#000"/><rect x="15" y="14" width="1" height="1" fill="#000"/><path d="M0.5,0.5 L15.5,15.5 M15.5,0.5 L0.5,15.5" fill="none" stroke="#b01818" stroke-width="1" shape-rendering="geometricPrecision" /></g><g transform="translate(541,849)"><rect x="0" y="0" width="16" height="16" fill="#000084"/><rect x="2" y="0" width="1" height="16" fill="#ffffff"/><rect x="5" y="0" width="1" height="16" fill="#ffffff"/><rect x="8" y="0" width="1" height="16" fill="#ffffff"/><rect x="11" y="0" width="1" height="16" fill="#ffffff"/><rect x="14" y="0" width="1" height="16" fill="#ffffff"/><rect x="0" y="2" width="16" height="1" fill="#ffffff"/><rect x="0" y="5" width="16" height="1" fill="#ffffff"/><rect x="0" y="8" width="16" height="1" fill="#ffffff"/><rect x="0" y="11" width="16" height="1" fill="#ffffff"/><rect x="0" y="14" width="16" height="1" fill="#ffffff"/><rect x="3" y="3" width="10" height="10" fill="#848284"/><path d="M0.5,0.5 L15.5,15.5 M15.5,0.5 L0.5,15.5" fill="none" stroke="#b01818" stroke-width="1" shape-rendering="geometricPrecision" /></g><g transform="translate(571,849)"><path d="M1,2 H7 V6 H10 V10 H6 V7 H1 Z" fill="#a5a2a5" stroke="none" stroke-width="1" shape-rendering="geometricPrecision" /><path d="M8,8 L13,13" fill="none" stroke="#a5a2a5" stroke-width="2.5" shape-rendering="geometricPrecision" /><path d="M10,14 L15,14 L15,9 Z" fill="#a5a2a5" stroke="none" stroke-width="1" shape-rendering="geometricPrecision" /></g><rect x="3" y="872" width="41" height="10" fill="#dedfde" /><rect x="3" y="873" width="41" height="1" fill="#ffffff" /><rect x="3" y="873" width="1" height="9" fill="#ffffff" /><rect x="3" y="881" width="41" height="1" fill="#9c9e9c" /><rect x="43" y="872" width="1" height="10" fill="#9c9e9c" /><rect x="44" y="872" width="41" height="10" fill="#dedfde" /><rect x="44" y="873" width="41" height="1" fill="#ffffff" /><rect x="44" y="873" width="1" height="9" fill="#ffffff" /><rect x="44" y="881" width="41" height="1" fill="#9c9e9c" /><rect x="84" y="872" width="1" height="10" fill="#9c9e9c" /><rect x="6" y="875" width="1" height="1" fill="#9c9e9c"/><rect x="7" y="876" width="1" height="1" fill="#ffffff"/><rect x="9" y="875" width="1" height="1" fill="#9c9e9c"/><rect x="10" y="876" width="1" height="1" fill="#ffffff"/><rect x="12" y="875" width="1" height="1" fill="#9c9e9c"/><rect x="13" y="876" width="1" height="1" fill="#ffffff"/><rect x="7" y="879" width="1" height="1" fill="#9c9e9c"/><rect x="8" y="880" width="1" height="1" fill="#ffffff"/><rect x="10" y="879" width="1" height="1" fill="#9c9e9c"/><rect x="11" y="880" width="1" height="1" fill="#ffffff"/><rect x="13" y="879" width="1" height="1" fill="#9c9e9c"/><rect x="14" y="880" width="1" height="1" fill="#ffffff"/><rect x="35" y="875" width="1" height="1" fill="#9c9e9c"/><rect x="36" y="876" width="1" height="1" fill="#ffffff"/><rect x="38" y="875" width="1" height="1" fill="#9c9e9c"/><rect x="39" y="876" width="1" height="1" fill="#ffffff"/><rect x="34" y="879" width="1" height="1" fill="#9c9e9c"/><rect x="35" y="880" width="1" height="1" fill="#ffffff"/><rect x="37" y="879" width="1" height="1" fill="#9c9e9c"/><rect x="38" y="880" width="1" height="1" fill="#ffffff"/><rect x="40" y="879" width="1" height="1" fill="#9c9e9c"/><rect x="41" y="880" width="1" height="1" fill="#ffffff"/><rect x="47" y="875" width="1" height="1" fill="#9c9e9c"/><rect x="48" y="876" width="1" height="1" fill="#ffffff"/><rect x="50" y="875" width="1" height="1" fill="#9c9e9c"/><rect x="51" y="876" width="1" height="1" fill="#ffffff"/><rect x="53" y="875" width="1" height="1" fill="#9c9e9c"/><rect x="54" y="876" width="1" height="1" fill="#ffffff"/><rect x="48" y="879" width="1" height="1" fill="#9c9e9c"/><rect x="49" y="880" width="1" height="1" fill="#ffffff"/><rect x="51" y="879" width="1" height="1" fill="#9c9e9c"/><rect x="52" y="880" width="1" height="1" fill="#ffffff"/><rect x="54" y="879" width="1" height="1" fill="#9c9e9c"/><rect x="55" y="880" width="1" height="1" fill="#ffffff"/><rect x="77" y="875" width="1" height="1" fill="#9c9e9c"/><rect x="78" y="876" width="1" height="1" fill="#ffffff"/><rect x="80" y="875" width="1" height="1" fill="#9c9e9c"/><rect x="81" y="876" width="1" height="1" fill="#ffffff"/><rect x="77" y="879" width="1" height="1" fill="#9c9e9c"/><rect x="78" y="880" width="1" height="1" fill="#ffffff"/><rect x="80" y="879" width="1" height="1" fill="#9c9e9c"/><rect x="81" y="880" width="1" height="1" fill="#ffffff"/><path d="M18,875.5 L28,875.5 L23,880.5 Z" fill="#848284" stroke="none" stroke-width="1" shape-rendering="geometricPrecision" /><path d="M18,875.5 L23,880.5 L28,875.5" fill="none" stroke="#000" stroke-width="0.8" shape-rendering="geometricPrecision" /><g transform="translate(59,872)"><ellipse cx="7" cy="4" rx="4" ry="3.5" fill="#f0f0f0" stroke="#000" stroke-width="1.2" shape-rendering="geometricPrecision"/><path d="M4,6 L1,9.5" fill="none" stroke="#000" stroke-width="1.2" shape-rendering="geometricPrecision" /><ellipse cx="5" cy="6" rx="2.5" ry="2" fill="#c0c0c0" stroke="#000" stroke-width="0.8" shape-rendering="geometricPrecision"/></g><rect x="8" y="892" width="14" height="14" fill="#ffffff" /><rect x="8" y="892" width="13" height="13" fill="#949694" /><rect x="9" y="893" width="12" height="12" fill="#ffffff" /><path d="M9,893 L21,905 M21,893 L9,905" fill="none" stroke="#000" stroke-width="1" shape-rendering="geometricPrecision" /><rect x="24" y="892" width="14" height="14" fill="#ffffff" /><rect x="24" y="892" width="13" height="13" fill="#949694" /><rect x="25" y="893" width="12" height="12" fill="#000000" /><rect x="40" y="892" width="14" height="14" fill="#ffffff" /><rect x="40" y="892" width="13" height="13" fill="#949694" /><rect x="41" y="893" width="12" height="12" fill="#000084" /><rect x="56" y="892" width="14" height="14" fill="#ffffff" /><rect x="56" y="892" width="13" height="13" fill="#949694" /><rect x="57" y="893" width="12" height="12" fill="#008200" /><rect x="72" y="892" width="14" height="14" fill="#ffffff" /><rect x="72" y="892" width="13" height="13" fill="#949694" /><rect x="73" y="893" width="12" height="12" fill="#008284" /><rect x="88" y="892" width="14" height="14" fill="#ffffff" /><rect x="88" y="892" width="13" height="13" fill="#949694" /><rect x="89" y="893" width="12" height="12" fill="#840000" /><rect x="104" y="892" width="14" height="14" fill="#ffffff" /><rect x="104" y="892" width="13" height="13" fill="#949694" /><rect x="105" y="893" width="12" height="12" fill="#840084" /><rect x="120" y="892" width="14" height="14" fill="#ffffff" /><rect x="120" y="892" width="13" height="13" fill="#949694" /><rect x="121" y="893" width="12" height="12" fill="#848200" /><rect x="136" y="892" width="14" height="14" fill="#ffffff" /><rect x="136" y="892" width="13" height="13" fill="#949694" /><rect x="137" y="893" width="12" height="12" fill="#848284" /><rect x="152" y="892" width="14" height="14" fill="#ffffff" /><rect x="152" y="892" width="13" height="13" fill="#949694" /><rect x="153" y="893" width="12" height="12" fill="#c6c3c6" /><rect x="168" y="892" width="14" height="14" fill="#ffffff" /><rect x="168" y="892" width="13" height="13" fill="#949694" /><rect x="169" y="893" width="12" height="12" fill="#0000ff" /><rect x="184" y="892" width="14" height="14" fill="#ffffff" /><rect x="184" y="892" width="13" height="13" fill="#949694" /><rect x="185" y="893" width="12" height="12" fill="#00ff00" /><rect x="200" y="892" width="14" height="14" fill="#ffffff" /><rect x="200" y="892" width="13" height="13" fill="#949694" /><rect x="201" y="893" width="12" height="12" fill="#00ffff" /><rect x="216" y="892" width="14" height="14" fill="#ffffff" /><rect x="216" y="892" width="13" height="13" fill="#949694" /><rect x="217" y="893" width="12" height="12" fill="#ff0000" /><rect x="232" y="892" width="14" height="14" fill="#ffffff" /><rect x="232" y="892" width="13" height="13" fill="#949694" /><rect x="233" y="893" width="12" height="12" fill="#ff00ff" /><rect x="248" y="892" width="14" height="14" fill="#ffffff" /><rect x="248" y="892" width="13" height="13" fill="#949694" /><rect x="249" y="893" width="12" height="12" fill="#ffff00" /><rect x="264" y="892" width="14" height="14" fill="#ffffff" /><rect x="264" y="892" width="13" height="13" fill="#949694" /><rect x="265" y="893" width="12" height="12" fill="#ffffff" /><rect x="280" y="892" width="14" height="14" fill="#ffffff" /><rect x="280" y="892" width="13" height="13" fill="#949694" /><rect x="281" y="893" width="12" height="12" fill="#313031" /><rect x="296" y="892" width="14" height="14" fill="#ffffff" /><rect x="296" y="892" width="13" height="13" fill="#949694" /><rect x="297" y="893" width="12" height="12" fill="#4a4d4a" /><rect x="312" y="892" width="14" height="14" fill="#ffffff" /><rect x="312" y="892" width="13" height="13" fill="#949694" /><rect x="313" y="893" width="12" height="12" fill="#636563" /><rect x="328" y="892" width="14" height="14" fill="#ffffff" /><rect x="328" y="892" width="13" height="13" fill="#949694" /><rect x="329" y="893" width="12" height="12" fill="#9c9a9c" /><rect x="344" y="892" width="14" height="14" fill="#ffffff" /><rect x="344" y="892" width="13" height="13" fill="#949694" /><rect x="345" y="893" width="12" height="12" fill="#b5b2b5" /><rect x="360" y="892" width="14" height="14" fill="#ffffff" /><rect x="360" y="892" width="13" height="13" fill="#949694" /><rect x="361" y="893" width="12" height="12" fill="#cecfce" /><rect x="376" y="892" width="14" height="14" fill="#ffffff" /><rect x="376" y="892" width="13" height="13" fill="#949694" /><rect x="377" y="893" width="12" height="12" fill="#e7e7e7" /><rect x="392" y="892" width="14" height="14" fill="#ffffff" /><rect x="392" y="892" width="13" height="13" fill="#949694" /><rect x="393" y="893" width="12" height="12" fill="#e7e7ff" /><rect x="408" y="892" width="14" height="14" fill="#ffffff" /><rect x="408" y="892" width="13" height="13" fill="#949694" /><rect x="409" y="893" width="12" height="12" fill="#ff3063" /><rect x="424" y="892" width="14" height="14" fill="#ffffff" /><rect x="424" y="892" width="13" height="13" fill="#949694" /><rect x="425" y="893" width="12" height="12" fill="#de2000" /><rect x="440" y="892" width="14" height="14" fill="#ffffff" /><rect x="440" y="892" width="13" height="13" fill="#949694" /><rect x="441" y="893" width="12" height="12" fill="#bd4500" /><rect x="456" y="892" width="14" height="14" fill="#ffffff" /><rect x="456" y="892" width="13" height="13" fill="#949694" /><rect x="457" y="893" width="12" height="12" fill="#ff3031" /><rect x="472" y="892" width="14" height="14" fill="#ffffff" /><rect x="472" y="892" width="13" height="13" fill="#949694" /><rect x="473" y="893" width="12" height="12" fill="#ef6139" /><rect x="488" y="892" width="14" height="14" fill="#ffffff" /><rect x="488" y="892" width="13" height="13" fill="#949694" /><rect x="489" y="893" width="12" height="12" fill="#bd4542" /><rect x="504" y="892" width="14" height="14" fill="#ffffff" /><rect x="504" y="892" width="13" height="13" fill="#949694" /><rect x="505" y="893" width="12" height="12" fill="#bd0042" /><rect x="520" y="892" width="14" height="14" fill="#ffffff" /><rect x="520" y="892" width="13" height="13" fill="#949694" /><rect x="521" y="893" width="12" height="12" fill="#9c284a" /><rect x="536" y="892" width="14" height="14" fill="#ffffff" /><rect x="536" y="892" width="13" height="13" fill="#949694" /><rect x="537" y="893" width="12" height="12" fill="#94006b" /><rect x="552" y="892" width="14" height="14" fill="#ffffff" /><rect x="552" y="892" width="13" height="13" fill="#949694" /><rect x="553" y="893" width="12" height="12" fill="#94456b" /><rect x="568" y="892" width="14" height="14" fill="#ffffff" /><rect x="568" y="892" width="13" height="13" fill="#949694" /><rect x="569" y="893" width="12" height="12" fill="#944594" /><rect x="584" y="892" width="14" height="14" fill="#ffffff" /><rect x="584" y="892" width="13" height="13" fill="#949694" /><rect x="585" y="893" width="12" height="12" fill="#9c65ce" /><rect x="600" y="892" width="14" height="14" fill="#ffffff" /><rect x="600" y="892" width="13" height="13" fill="#949694" /><rect x="601" y="893" width="12" height="12" fill="#6b4594" /><rect x="616" y="892" width="14" height="14" fill="#ffffff" /><rect x="616" y="892" width="13" height="13" fill="#949694" /><rect x="617" y="893" width="12" height="12" fill="#6b2094" /><rect x="632" y="892" width="14" height="14" fill="#ffffff" /><rect x="632" y="892" width="13" height="13" fill="#949694" /><rect x="633" y="893" width="12" height="12" fill="#6b0094" /><rect x="648" y="892" width="14" height="14" fill="#ffffff" /><rect x="648" y="892" width="13" height="13" fill="#949694" /><rect x="649" y="893" width="12" height="12" fill="#5a10a5" /><rect x="664" y="892" width="14" height="14" fill="#ffffff" /><rect x="664" y="892" width="13" height="13" fill="#949694" /><rect x="665" y="893" width="12" height="12" fill="#29009c" /><rect x="680" y="892" width="14" height="14" fill="#ffffff" /><rect x="680" y="892" width="13" height="13" fill="#949694" /><rect x="681" y="893" width="12" height="12" fill="#4200bd" /><rect x="696" y="892" width="14" height="14" fill="#ffffff" /><rect x="696" y="892" width="13" height="13" fill="#949694" /><rect x="697" y="893" width="12" height="12" fill="#2100de" /><rect x="712" y="892" width="14" height="14" fill="#ffffff" /><rect x="712" y="892" width="13" height="13" fill="#949694" /><rect x="713" y="893" width="12" height="12" fill="#2120de" /><rect x="728" y="892" width="14" height="14" fill="#ffffff" /><rect x="728" y="892" width="13" height="13" fill="#949694" /><rect x="729" y="893" width="12" height="12" fill="#0045ff" /><rect x="744" y="892" width="14" height="14" fill="#ffffff" /><rect x="744" y="892" width="13" height="13" fill="#949694" /><rect x="745" y="893" width="12" height="12" fill="#009aff" /><rect x="760" y="892" width="14" height="14" fill="#ffffff" /><rect x="760" y="892" width="13" height="13" fill="#949694" /><rect x="761" y="893" width="12" height="12" fill="#00baff" /><rect x="776" y="892" width="14" height="14" fill="#ffffff" /><rect x="776" y="892" width="13" height="13" fill="#949694" /><rect x="777" y="893" width="12" height="12" fill="#9ccfff" /><rect x="792" y="892" width="14" height="14" fill="#ffffff" /><rect x="792" y="892" width="13" height="13" fill="#949694" /><rect x="793" y="893" width="12" height="12" fill="#00dfff" /><rect x="808" y="892" width="14" height="14" fill="#ffffff" /><rect x="808" y="892" width="13" height="13" fill="#949694" /><rect x="809" y="893" width="12" height="12" fill="#00cfce" /><rect x="824" y="892" width="14" height="14" fill="#ffffff" /><rect x="824" y="892" width="13" height="13" fill="#949694" /><rect x="825" y="893" width="12" height="12" fill="#21bade" /><rect x="840" y="892" width="14" height="14" fill="#ffffff" /><rect x="840" y="892" width="13" height="13" fill="#949694" /><rect x="841" y="893" width="12" height="12" fill="#42babd" /><rect x="856" y="892" width="14" height="14" fill="#ffffff" /><rect x="856" y="892" width="13" height="13" fill="#949694" /><rect x="857" y="893" width="12" height="12" fill="#31a2a5" /><rect x="872" y="892" width="14" height="14" fill="#ffffff" /><rect x="872" y="892" width="13" height="13" fill="#949694" /><rect x="873" y="893" width="12" height="12" fill="#188a8c" /><rect x="888" y="892" width="14" height="14" fill="#ffffff" /><rect x="888" y="892" width="13" height="13" fill="#949694" /><rect x="889" y="893" width="12" height="12" fill="#00696b" /><rect x="904" y="892" width="14" height="14" fill="#ffffff" /><rect x="904" y="892" width="13" height="13" fill="#949694" /><rect x="905" y="893" width="12" height="12" fill="#00494a" /><rect x="920" y="892" width="14" height="14" fill="#ffffff" /><rect x="920" y="892" width="13" height="13" fill="#949694" /><rect x="921" y="893" width="12" height="12" fill="#315d00" /><rect x="936" y="892" width="14" height="14" fill="#ffffff" /><rect x="936" y="892" width="13" height="13" fill="#949694" /><rect x="937" y="893" width="12" height="12" fill="#5a8621" /><rect x="952" y="892" width="14" height="14" fill="#ffffff" /><rect x="952" y="892" width="13" height="13" fill="#949694" /><rect x="953" y="893" width="12" height="12" fill="#7ba642" /><rect x="968" y="892" width="14" height="14" fill="#ffffff" /><rect x="968" y="892" width="13" height="13" fill="#949694" /><rect x="969" y="893" width="12" height="12" fill="#94be5a" /><rect x="984" y="892" width="14" height="14" fill="#ffffff" /><rect x="984" y="892" width="13" height="13" fill="#949694" /><rect x="985" y="893" width="12" height="12" fill="#00ae00" /><rect x="1000" y="892" width="14" height="14" fill="#ffffff" /><rect x="1000" y="892" width="13" height="13" fill="#949694" /><rect x="1001" y="893" width="12" height="12" fill="#31cf63" /><rect x="1016" y="892" width="14" height="14" fill="#ffffff" /><rect x="1016" y="892" width="13" height="13" fill="#949694" /><rect x="1017" y="893" width="12" height="12" fill="#39eb39" /><rect x="1032" y="892" width="14" height="14" fill="#ffffff" /><rect x="1032" y="892" width="13" height="13" fill="#949694" /><rect x="1033" y="893" width="12" height="12" fill="#21ff21" /><rect x="1048" y="892" width="14" height="14" fill="#ffffff" /><rect x="1048" y="892" width="13" height="13" fill="#949694" /><rect x="1049" y="893" width="12" height="12" fill="#e7ff00" /><rect x="1064" y="892" width="14" height="14" fill="#ffffff" /><rect x="1064" y="892" width="13" height="13" fill="#949694" /><rect x="1065" y="893" width="12" height="12" fill="#ffff9c" /><rect x="1080" y="892" width="14" height="14" fill="#ffffff" /><rect x="1080" y="892" width="13" height="13" fill="#949694" /><rect x="1081" y="893" width="12" height="12" fill="#ffff63" /><rect x="1096" y="892" width="14" height="14" fill="#ffffff" /><rect x="1096" y="892" width="13" height="13" fill="#949694" /><rect x="1097" y="893" width="12" height="12" fill="#e7e74a" /><rect x="1112" y="892" width="14" height="14" fill="#ffffff" /><rect x="1112" y="892" width="13" height="13" fill="#949694" /><rect x="1113" y="893" width="12" height="12" fill="#cecf00" /><rect x="1128" y="892" width="14" height="14" fill="#ffffff" /><rect x="1128" y="892" width="13" height="13" fill="#949694" /><rect x="1129" y="893" width="12" height="12" fill="#b5b200" /><rect x="1144" y="892" width="14" height="14" fill="#ffffff" /><rect x="1144" y="892" width="13" height="13" fill="#949694" /><rect x="1145" y="893" width="12" height="12" fill="#848218" /><rect x="1160" y="892" width="14" height="14" fill="#ffffff" /><rect x="1160" y="892" width="13" height="13" fill="#949694" /><rect x="1161" y="893" width="12" height="12" fill="#636500" /><rect x="1176" y="892" width="14" height="14" fill="#ffffff" /><rect x="1176" y="892" width="13" height="13" fill="#949694" /><rect x="1177" y="893" width="12" height="12" fill="#4a1800" /><rect x="1192" y="892" width="14" height="14" fill="#ffffff" /><rect x="1192" y="892" width="13" height="13" fill="#949694" /><rect x="1193" y="893" width="12" height="12" fill="#633000" /><rect x="1208" y="892" width="14" height="14" fill="#ffffff" /><rect x="1208" y="892" width="13" height="13" fill="#949694" /><rect x="1209" y="893" width="12" height="12" fill="#844d18" /><rect x="1224" y="892" width="14" height="14" fill="#ffffff" /><rect x="1224" y="892" width="13" height="13" fill="#949694" /><rect x="1225" y="893" width="12" height="12" fill="#9c6531" /><rect x="1240" y="892" width="14" height="14" fill="#ffffff" /><rect x="1240" y="892" width="13" height="13" fill="#949694" /><rect x="1241" y="893" width="12" height="12" fill="#ce6531" /><rect x="1256" y="892" width="14" height="14" fill="#ffffff" /><rect x="1256" y="892" width="13" height="13" fill="#949694" /><rect x="1257" y="893" width="12" height="12" fill="#ff6531" /><rect x="8" y="908" width="14" height="14" fill="#ffffff" /><rect x="8" y="908" width="13" height="13" fill="#949694" /><rect x="9" y="909" width="12" height="12" fill="#ff9a63" /><rect x="24" y="908" width="14" height="14" fill="#ffffff" /><rect x="24" y="908" width="13" height="13" fill="#949694" /><rect x="25" y="909" width="12" height="12" fill="#ffcf9c" /><rect x="40" y="908" width="14" height="14" fill="#ffffff" /><rect x="40" y="908" width="13" height="13" fill="#949694" /><rect x="41" y="909" width="12" height="12" fill="#9c9aff" /><rect x="56" y="908" width="14" height="14" fill="#ffffff" /><rect x="56" y="908" width="13" height="13" fill="#949694" /><rect x="57" y="909" width="12" height="12" fill="#9c3063" /><rect x="72" y="908" width="14" height="14" fill="#ffffff" /><rect x="72" y="908" width="13" height="13" fill="#949694" /><rect x="73" y="909" width="12" height="12" fill="#ffffce" /><rect x="88" y="908" width="14" height="14" fill="#ffffff" /><rect x="88" y="908" width="13" height="13" fill="#949694" /><rect x="89" y="909" width="12" height="12" fill="#ceffff" /><rect x="104" y="908" width="14" height="14" fill="#ffffff" /><rect x="104" y="908" width="13" height="13" fill="#949694" /><rect x="105" y="909" width="12" height="12" fill="#630063" /><rect x="120" y="908" width="14" height="14" fill="#ffffff" /><rect x="120" y="908" width="13" height="13" fill="#949694" /><rect x="121" y="909" width="12" height="12" fill="#ff8284" /><rect x="136" y="908" width="14" height="14" fill="#ffffff" /><rect x="136" y="908" width="13" height="13" fill="#949694" /><rect x="137" y="909" width="12" height="12" fill="#0065ce" /><rect x="152" y="908" width="14" height="14" fill="#ffffff" /><rect x="152" y="908" width="13" height="13" fill="#949694" /><rect x="153" y="909" width="12" height="12" fill="#313063" /><rect x="168" y="908" width="14" height="14" fill="#ffffff" /><rect x="168" y="908" width="13" height="13" fill="#949694" /><rect x="169" y="909" width="12" height="12" fill="#63659c" /><rect x="184" y="908" width="14" height="14" fill="#ffffff" /><rect x="184" y="908" width="13" height="13" fill="#949694" /><rect x="185" y="909" width="12" height="12" fill="#9c9ace" /><rect x="200" y="908" width="14" height="14" fill="#ffffff" /><rect x="200" y="908" width="13" height="13" fill="#949694" /><rect x="201" y="909" width="12" height="12" fill="#cecfff" /><g transform="translate(387,938)"><path d="M0,4.5 H6 M3.5,0 V7" fill="none" stroke="#0000ff" stroke-width="1" /><path d="M5.5,5.5 H13.5 V11.5 H5.5 Z" fill="none" stroke="#000" stroke-width="1" stroke-dasharray="1,1"/></g><g transform="translate(63,6)"><rect x="0" y="0" width="13" height="15" fill="#000"/><rect x="1" y="1" width="11" height="13" fill="#ffffff"/><rect x="1" y="3" width="11" height="1" fill="#000"/><rect x="2" y="4" width="9" height="6" fill="#000"/><rect x="3" y="5" width="7" height="4" fill="#ffffff"/><rect x="4" y="6" width="3" height="1" fill="#ff0000"/><rect x="4" y="8" width="3" height="1" fill="#ff0000"/><path d="M7.5,8.5 L9.5,5.5" fill="none" stroke="#0000ff" stroke-width="1.2" shape-rendering="geometricPrecision" /><path d="M6.5,10 L4,13.5 M6.5,10 L9,13.5" fill="none" stroke="#000" stroke-width="1.1" shape-rendering="geometricPrecision" /></g><rect x="37" y="808" width="21" height="17" fill="#dedfde" /><rect x="37" y="808" width="21" height="1" fill="#9c9e9c" /><rect x="57" y="808" width="1" height="17" fill="#9c9e9c" /><rect x="37" y="808" width="1" height="17" fill="#9c9e9c" /><rect x="37" y="151" width="1" height="10" fill="#9c9e9c" /><text transform="translate(51.5,806.04) rotate(-90)" x="-8.73" y="0" font-family="Liberation Sans" font-size="14.53" fill="#000" textLength="17.46" lengthAdjust="spacingAndGlyphs">21</text><rect x="3" y="841" width="1273" height="1" fill="#ffffff" /><rect x="3" y="841" width="30" height="1" fill="#9c9e9c" /><rect x="3" y="842" width="1273" height="1" fill="#ffffff" /><rect x="4" y="121" width="1" height="720" fill="#ffffff" />
</svg></body></html>
